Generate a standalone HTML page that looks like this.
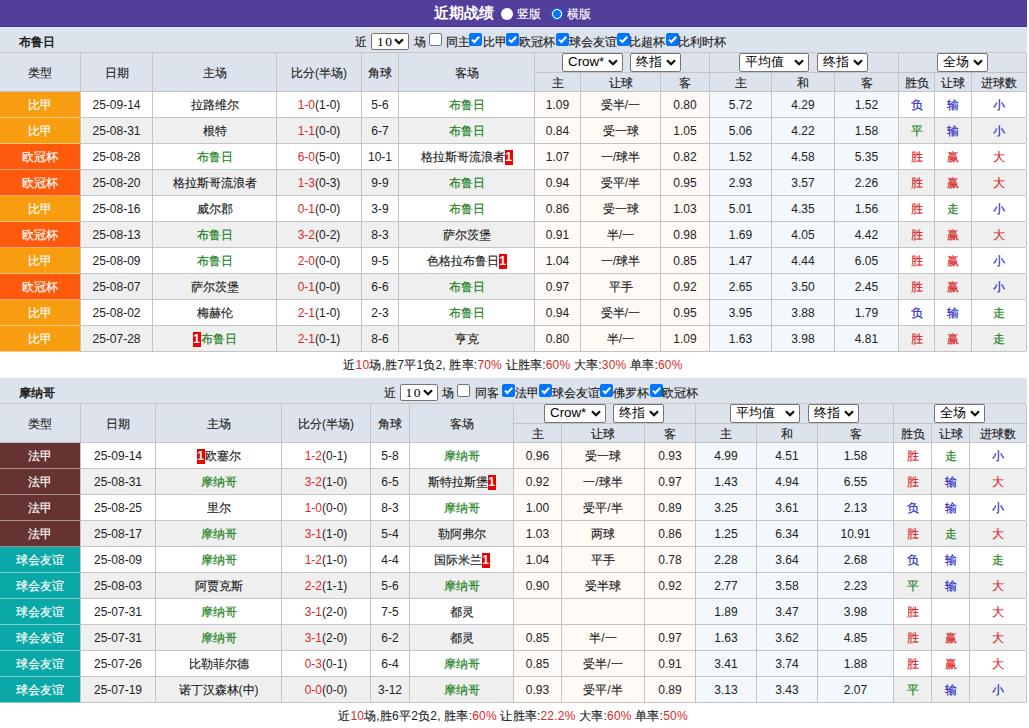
<!DOCTYPE html><html><head><meta charset="utf-8"><style>
html,body{margin:0;padding:0;background:#fff;}
body{width:1029px;height:728px;overflow:hidden;position:relative;font-family:"Liberation Sans",sans-serif;font-size:12px;color:#222;}
.b{position:absolute}
.t{position:absolute;text-align:center;white-space:nowrap;}
.c{-webkit-text-stroke:0.15px currentColor}
.bold .c{-webkit-text-stroke:0}
.bold{font-weight:bold;}
.hd{color:#222}
.ty{color:#fff}
.gr{color:#178017}
.rd{color:#d92a2a}
.rc{display:inline-block;background:#e00;color:#fff;font-weight:bold;width:8px;height:15px;line-height:15px;text-align:center;vertical-align:middle;font-size:12px}
.sum{text-align:center;letter-spacing:0.2px}
.sel{position:absolute;height:17px;border:1px solid #767676;border-radius:2px;background:#fff;font-size:13.33px;line-height:16px;color:#000}
.sel span{position:absolute;left:5px;top:0}
.chev{position:absolute;right:4px;top:5px}
.cb{position:absolute;width:11px;height:11px;border:1px solid #767676;border-radius:2px;background:#fff}
.cb.on{background:#0075ff;border-color:#0075ff}
.cb svg{position:absolute;left:-1px;top:-1px}
.radio{position:absolute;width:12px;height:12px;border-radius:50%;background:#fff}
.radio.on{background:radial-gradient(circle,#0075ff 0 3.6px,#fff 4px 4.7px,#0075ff 5.1px)}
</style></head><body>
<div class="b" style="left:0px;top:0px;width:1027px;height:27px;background:#523f9c"></div>
<div class="b" style="left:0px;top:26px;width:1027px;height:1px;background:#4a388e"></div>
<div class="t bold" style="left:434px;top:-1px;height:27px;line-height:27px;color:#fff;font-size:15px"><span class=c>近期战绩</span></div>
<div class="radio" style="left:500.5px;top:7.5px"></div>
<div class="t" style="left:517px;top:1px;height:27px;line-height:27px;color:#fff"><span class=c>竖版</span></div>
<div class="radio on" style="left:550.5px;top:7.5px"></div>
<div class="t" style="left:567px;top:1px;height:27px;line-height:27px;color:#fff"><span class=c>横版</span></div>
<div class="b" style="left:0px;top:27px;width:1027px;height:25px;background:#dce3ec"></div>
<div class="t bold" style="left:19px;top:30px;width:80px;height:25px;line-height:25px;text-align:left"><span class=c>布鲁日</span></div>
<div class="t tb" style="left:355px;top:29.5px;height:25px;line-height:25px"><span class=c>近</span></div><div class="sel" style="left:371px;top:33px;width:36px;height:15px;line-height:15px"><span style="left:5px;top:-0.5px;font-family:Liberation Serif;font-size:13.5px;letter-spacing:1.5px">10</span><svg class="chev" width="10" height="7" viewBox="0 0 10 7" style="right:4px;top:3.5px"><path d="M1 1.2 L5 5.2 L9 1.2" fill="none" stroke="#111" stroke-width="2.3"/></svg></div><div class="t tb" style="left:413.5px;top:29.5px;height:25px;line-height:25px"><span class=c>场</span></div><div class="cb" style="left:429px;top:33px"></div><div class="t tb" style="left:446px;top:29.5px;height:25px;line-height:25px"><span class=c>同主</span></div><div class="cb on" style="left:469px;top:33px"><svg width="13" height="13" viewBox="0 0 13 13"><path d="M3 6.6 L5.4 9 L10.2 3.8" fill="none" stroke="#fff" stroke-width="2"/></svg></div><div class="t tb" style="left:482.5px;top:29.5px;height:25px;line-height:25px"><span class=c>比甲</span></div><div class="cb on" style="left:506px;top:33px"><svg width="13" height="13" viewBox="0 0 13 13"><path d="M3 6.6 L5.4 9 L10.2 3.8" fill="none" stroke="#fff" stroke-width="2"/></svg></div><div class="t tb" style="left:519px;top:29.5px;height:25px;line-height:25px"><span class=c>欧冠杯</span></div><div class="cb on" style="left:556px;top:33px"><svg width="13" height="13" viewBox="0 0 13 13"><path d="M3 6.6 L5.4 9 L10.2 3.8" fill="none" stroke="#fff" stroke-width="2"/></svg></div><div class="t tb" style="left:568.5px;top:29.5px;height:25px;line-height:25px"><span class=c>球会友谊</span></div><div class="cb on" style="left:616.5px;top:33px"><svg width="13" height="13" viewBox="0 0 13 13"><path d="M3 6.6 L5.4 9 L10.2 3.8" fill="none" stroke="#fff" stroke-width="2"/></svg></div><div class="t tb" style="left:629px;top:29.5px;height:25px;line-height:25px"><span class=c>比超杯</span></div><div class="cb on" style="left:665.5px;top:33px"><svg width="13" height="13" viewBox="0 0 13 13"><path d="M3 6.6 L5.4 9 L10.2 3.8" fill="none" stroke="#fff" stroke-width="2"/></svg></div><div class="t tb" style="left:678px;top:29.5px;height:25px;line-height:25px"><span class=c>比利时杯</span></div>
<div class="b" style="left:0px;top:52px;width:1026px;height:1px;background:#c4c4c4"></div>
<div class="b" style="left:0px;top:53px;width:1026px;height:38px;background:#dce3ec"></div>
<div class="b" style="left:535px;top:72px;width:491px;height:1px;background:#c4c4c4"></div>
<div class="b" style="left:0px;top:91px;width:1026px;height:1px;background:#c4c4c4"></div>
<div class="b" style="left:80px;top:53px;width:1px;height:38px;background:#c4c4c4"></div>
<div class="b" style="left:152px;top:53px;width:1px;height:38px;background:#c4c4c4"></div>
<div class="b" style="left:276px;top:53px;width:1px;height:38px;background:#c4c4c4"></div>
<div class="b" style="left:361px;top:53px;width:1px;height:38px;background:#c4c4c4"></div>
<div class="b" style="left:398px;top:53px;width:1px;height:38px;background:#c4c4c4"></div>
<div class="b" style="left:534px;top:53px;width:1px;height:38px;background:#c4c4c4"></div>
<div class="b" style="left:709px;top:53px;width:1px;height:38px;background:#c4c4c4"></div>
<div class="b" style="left:898px;top:53px;width:1px;height:38px;background:#c4c4c4"></div>
<div class="b" style="left:1026px;top:53px;width:1px;height:38px;background:#c4c4c4"></div>
<div class="b" style="left:580px;top:73px;width:1px;height:18px;background:#c4c4c4"></div>
<div class="b" style="left:660px;top:73px;width:1px;height:18px;background:#c4c4c4"></div>
<div class="b" style="left:771px;top:73px;width:1px;height:18px;background:#c4c4c4"></div>
<div class="b" style="left:834px;top:73px;width:1px;height:18px;background:#c4c4c4"></div>
<div class="b" style="left:934px;top:73px;width:1px;height:18px;background:#c4c4c4"></div>
<div class="b" style="left:971px;top:73px;width:1px;height:18px;background:#c4c4c4"></div>
<div class="t hd" style="left:0px;top:54px;width:80px;height:38px;line-height:38px;"><span class=c>类型</span></div>
<div class="t hd" style="left:81px;top:54px;width:71px;height:38px;line-height:38px;"><span class=c>日期</span></div>
<div class="t hd" style="left:153px;top:54px;width:123px;height:38px;line-height:38px;"><span class=c>主场</span></div>
<div class="t hd" style="left:277px;top:54px;width:84px;height:38px;line-height:38px;"><span class=c>比分</span>(<span class=c>半场</span>)</div>
<div class="t hd" style="left:362px;top:54px;width:36px;height:38px;line-height:38px;"><span class=c>角球</span></div>
<div class="t hd" style="left:399px;top:54px;width:135px;height:38px;line-height:38px;"><span class=c>客场</span></div>
<div class="t hd" style="left:535px;top:74px;width:45px;height:18px;line-height:18px;"><span class=c>主</span></div>
<div class="t hd" style="left:581px;top:74px;width:79px;height:18px;line-height:18px;"><span class=c>让球</span></div>
<div class="t hd" style="left:661px;top:74px;width:48px;height:18px;line-height:18px;"><span class=c>客</span></div>
<div class="t hd" style="left:710px;top:74px;width:61px;height:18px;line-height:18px;"><span class=c>主</span></div>
<div class="t hd" style="left:772px;top:74px;width:62px;height:18px;line-height:18px;"><span class=c>和</span></div>
<div class="t hd" style="left:835px;top:74px;width:63px;height:18px;line-height:18px;"><span class=c>客</span></div>
<div class="t hd" style="left:899px;top:74px;width:35px;height:18px;line-height:18px;"><span class=c>胜负</span></div>
<div class="t hd" style="left:935px;top:74px;width:36px;height:18px;line-height:18px;"><span class=c>让球</span></div>
<div class="t hd" style="left:972px;top:74px;width:54px;height:18px;line-height:18px;"><span class=c>进球数</span></div>
<div class="sel" style="left:562px;top:53px;width:59px"><span>Crow*</span><svg class="chev" width="10" height="7" viewBox="0 0 10 7"><path d="M1 1.2 L5 5.2 L9 1.2" fill="none" stroke="#111" stroke-width="2.3"/></svg></div><div class="sel" style="left:630px;top:53px;width:49px"><span>终指</span><svg class="chev" width="10" height="7" viewBox="0 0 10 7"><path d="M1 1.2 L5 5.2 L9 1.2" fill="none" stroke="#111" stroke-width="2.3"/></svg></div><div class="sel" style="left:739px;top:53px;width:68px"><span>平均值</span><svg class="chev" width="10" height="7" viewBox="0 0 10 7"><path d="M1 1.2 L5 5.2 L9 1.2" fill="none" stroke="#111" stroke-width="2.3"/></svg></div><div class="sel" style="left:817px;top:53px;width:49px"><span>终指</span><svg class="chev" width="10" height="7" viewBox="0 0 10 7"><path d="M1 1.2 L5 5.2 L9 1.2" fill="none" stroke="#111" stroke-width="2.3"/></svg></div><div class="sel" style="left:937px;top:53px;width:49px"><span>全场</span><svg class="chev" width="10" height="7" viewBox="0 0 10 7"><path d="M1 1.2 L5 5.2 L9 1.2" fill="none" stroke="#111" stroke-width="2.3"/></svg></div>
<div class="b" style="left:0px;top:92px;width:1026px;height:25px;background:#fff"></div>
<div class="b" style="left:0px;top:92px;width:80px;height:25px;background:#f99d10"></div>
<div class="b" style="left:535px;top:92px;width:174px;height:25px;background:#fffaf6"></div>
<div class="b" style="left:710px;top:92px;width:188px;height:25px;background:#f2f8fc"></div>
<div class="b" style="left:80px;top:117px;width:946px;height:1px;background:#c4c4c4"></div>
<div class="b" style="left:0px;top:117px;width:80px;height:1px;background:#f99d10"></div>
<div class="b" style="left:0px;top:117px;width:80px;height:1px;background:rgba(255,255,255,0.45)"></div>
<div class="b" style="left:80px;top:92px;width:1px;height:25px;background:#c4c4c4"></div>
<div class="b" style="left:152px;top:92px;width:1px;height:25px;background:#c4c4c4"></div>
<div class="b" style="left:276px;top:92px;width:1px;height:25px;background:#c4c4c4"></div>
<div class="b" style="left:361px;top:92px;width:1px;height:25px;background:#c4c4c4"></div>
<div class="b" style="left:398px;top:92px;width:1px;height:25px;background:#c4c4c4"></div>
<div class="b" style="left:534px;top:92px;width:1px;height:25px;background:#c4c4c4"></div>
<div class="b" style="left:580px;top:92px;width:1px;height:25px;background:#c4c4c4"></div>
<div class="b" style="left:660px;top:92px;width:1px;height:25px;background:#c4c4c4"></div>
<div class="b" style="left:709px;top:92px;width:1px;height:25px;background:#c4c4c4"></div>
<div class="b" style="left:771px;top:92px;width:1px;height:25px;background:#c4c4c4"></div>
<div class="b" style="left:834px;top:92px;width:1px;height:25px;background:#c4c4c4"></div>
<div class="b" style="left:898px;top:92px;width:1px;height:25px;background:#c4c4c4"></div>
<div class="b" style="left:934px;top:92px;width:1px;height:25px;background:#c4c4c4"></div>
<div class="b" style="left:971px;top:92px;width:1px;height:25px;background:#c4c4c4"></div>
<div class="b" style="left:1026px;top:92px;width:1px;height:25px;background:#c4c4c4"></div>
<div class="t ty" style="left:0px;top:93px;width:80px;height:25px;line-height:25px;"><span class=c>比甲</span></div>
<div class="t " style="left:81px;top:93px;width:71px;height:25px;line-height:25px;">25-09-14</div>
<div class="t " style="left:153px;top:93px;width:123px;height:25px;line-height:25px;"><span class=c>拉路维尔</span></div>
<div class="t " style="left:277px;top:93px;width:84px;height:25px;line-height:25px;"><span class="rd">1-0</span>(1-0)</div>
<div class="t " style="left:362px;top:93px;width:36px;height:25px;line-height:25px;">5-6</div>
<div class="t " style="left:399px;top:93px;width:135px;height:25px;line-height:25px;"><span class="gr"><span class=c>布鲁日</span></span></div>
<div class="t " style="left:535px;top:93px;width:45px;height:25px;line-height:25px;">1.09</div>
<div class="t " style="left:581px;top:93px;width:79px;height:25px;line-height:25px;"><span class=c>受半</span>/<span class=c>一</span></div>
<div class="t " style="left:661px;top:93px;width:48px;height:25px;line-height:25px;">0.80</div>
<div class="t " style="left:710px;top:93px;width:61px;height:25px;line-height:25px;">5.72</div>
<div class="t " style="left:772px;top:93px;width:62px;height:25px;line-height:25px;">4.29</div>
<div class="t " style="left:835px;top:93px;width:63px;height:25px;line-height:25px;">1.52</div>
<div class="t " style="left:899px;top:93px;width:35px;height:25px;line-height:25px;color:#1c1cc0"><span class=c>负</span></div>
<div class="t " style="left:935px;top:93px;width:36px;height:25px;line-height:25px;color:#1c1cc0"><span class=c>输</span></div>
<div class="t " style="left:972px;top:93px;width:54px;height:25px;line-height:25px;color:#1c1cc0"><span class=c>小</span></div>
<div class="b" style="left:0px;top:118px;width:1026px;height:25px;background:#efefef"></div>
<div class="b" style="left:0px;top:118px;width:80px;height:25px;background:#f99d10"></div>
<div class="b" style="left:535px;top:118px;width:174px;height:25px;background:#fffaf6"></div>
<div class="b" style="left:710px;top:118px;width:188px;height:25px;background:#f2f8fc"></div>
<div class="b" style="left:80px;top:143px;width:946px;height:1px;background:#c4c4c4"></div>
<div class="b" style="left:0px;top:143px;width:80px;height:1px;background:#f99d10"></div>
<div class="b" style="left:0px;top:143px;width:80px;height:1px;background:rgba(255,255,255,0.45)"></div>
<div class="b" style="left:80px;top:118px;width:1px;height:25px;background:#c4c4c4"></div>
<div class="b" style="left:152px;top:118px;width:1px;height:25px;background:#c4c4c4"></div>
<div class="b" style="left:276px;top:118px;width:1px;height:25px;background:#c4c4c4"></div>
<div class="b" style="left:361px;top:118px;width:1px;height:25px;background:#c4c4c4"></div>
<div class="b" style="left:398px;top:118px;width:1px;height:25px;background:#c4c4c4"></div>
<div class="b" style="left:534px;top:118px;width:1px;height:25px;background:#c4c4c4"></div>
<div class="b" style="left:580px;top:118px;width:1px;height:25px;background:#c4c4c4"></div>
<div class="b" style="left:660px;top:118px;width:1px;height:25px;background:#c4c4c4"></div>
<div class="b" style="left:709px;top:118px;width:1px;height:25px;background:#c4c4c4"></div>
<div class="b" style="left:771px;top:118px;width:1px;height:25px;background:#c4c4c4"></div>
<div class="b" style="left:834px;top:118px;width:1px;height:25px;background:#c4c4c4"></div>
<div class="b" style="left:898px;top:118px;width:1px;height:25px;background:#c4c4c4"></div>
<div class="b" style="left:934px;top:118px;width:1px;height:25px;background:#c4c4c4"></div>
<div class="b" style="left:971px;top:118px;width:1px;height:25px;background:#c4c4c4"></div>
<div class="b" style="left:1026px;top:118px;width:1px;height:25px;background:#c4c4c4"></div>
<div class="t ty" style="left:0px;top:119px;width:80px;height:25px;line-height:25px;"><span class=c>比甲</span></div>
<div class="t " style="left:81px;top:119px;width:71px;height:25px;line-height:25px;">25-08-31</div>
<div class="t " style="left:153px;top:119px;width:123px;height:25px;line-height:25px;"><span class=c>根特</span></div>
<div class="t " style="left:277px;top:119px;width:84px;height:25px;line-height:25px;"><span class="rd">1-1</span>(0-0)</div>
<div class="t " style="left:362px;top:119px;width:36px;height:25px;line-height:25px;">6-7</div>
<div class="t " style="left:399px;top:119px;width:135px;height:25px;line-height:25px;"><span class="gr"><span class=c>布鲁日</span></span></div>
<div class="t " style="left:535px;top:119px;width:45px;height:25px;line-height:25px;">0.84</div>
<div class="t " style="left:581px;top:119px;width:79px;height:25px;line-height:25px;"><span class=c>受一球</span></div>
<div class="t " style="left:661px;top:119px;width:48px;height:25px;line-height:25px;">1.05</div>
<div class="t " style="left:710px;top:119px;width:61px;height:25px;line-height:25px;">5.06</div>
<div class="t " style="left:772px;top:119px;width:62px;height:25px;line-height:25px;">4.22</div>
<div class="t " style="left:835px;top:119px;width:63px;height:25px;line-height:25px;">1.58</div>
<div class="t " style="left:899px;top:119px;width:35px;height:25px;line-height:25px;color:#178017"><span class=c>平</span></div>
<div class="t " style="left:935px;top:119px;width:36px;height:25px;line-height:25px;color:#1c1cc0"><span class=c>输</span></div>
<div class="t " style="left:972px;top:119px;width:54px;height:25px;line-height:25px;color:#1c1cc0"><span class=c>小</span></div>
<div class="b" style="left:0px;top:144px;width:1026px;height:25px;background:#fff"></div>
<div class="b" style="left:0px;top:144px;width:80px;height:25px;background:#fd5a0d"></div>
<div class="b" style="left:535px;top:144px;width:174px;height:25px;background:#fffaf6"></div>
<div class="b" style="left:710px;top:144px;width:188px;height:25px;background:#f2f8fc"></div>
<div class="b" style="left:80px;top:169px;width:946px;height:1px;background:#c4c4c4"></div>
<div class="b" style="left:0px;top:169px;width:80px;height:1px;background:#fd5a0d"></div>
<div class="b" style="left:0px;top:169px;width:80px;height:1px;background:rgba(255,255,255,0.45)"></div>
<div class="b" style="left:80px;top:144px;width:1px;height:25px;background:#c4c4c4"></div>
<div class="b" style="left:152px;top:144px;width:1px;height:25px;background:#c4c4c4"></div>
<div class="b" style="left:276px;top:144px;width:1px;height:25px;background:#c4c4c4"></div>
<div class="b" style="left:361px;top:144px;width:1px;height:25px;background:#c4c4c4"></div>
<div class="b" style="left:398px;top:144px;width:1px;height:25px;background:#c4c4c4"></div>
<div class="b" style="left:534px;top:144px;width:1px;height:25px;background:#c4c4c4"></div>
<div class="b" style="left:580px;top:144px;width:1px;height:25px;background:#c4c4c4"></div>
<div class="b" style="left:660px;top:144px;width:1px;height:25px;background:#c4c4c4"></div>
<div class="b" style="left:709px;top:144px;width:1px;height:25px;background:#c4c4c4"></div>
<div class="b" style="left:771px;top:144px;width:1px;height:25px;background:#c4c4c4"></div>
<div class="b" style="left:834px;top:144px;width:1px;height:25px;background:#c4c4c4"></div>
<div class="b" style="left:898px;top:144px;width:1px;height:25px;background:#c4c4c4"></div>
<div class="b" style="left:934px;top:144px;width:1px;height:25px;background:#c4c4c4"></div>
<div class="b" style="left:971px;top:144px;width:1px;height:25px;background:#c4c4c4"></div>
<div class="b" style="left:1026px;top:144px;width:1px;height:25px;background:#c4c4c4"></div>
<div class="t ty" style="left:0px;top:145px;width:80px;height:25px;line-height:25px;"><span class=c>欧冠杯</span></div>
<div class="t " style="left:81px;top:145px;width:71px;height:25px;line-height:25px;">25-08-28</div>
<div class="t " style="left:153px;top:145px;width:123px;height:25px;line-height:25px;"><span class="gr"><span class=c>布鲁日</span></span></div>
<div class="t " style="left:277px;top:145px;width:84px;height:25px;line-height:25px;"><span class="rd">6-0</span>(5-0)</div>
<div class="t " style="left:362px;top:145px;width:36px;height:25px;line-height:25px;">10-1</div>
<div class="t " style="left:399px;top:145px;width:135px;height:25px;line-height:25px;"><span class=c>格拉斯哥流浪者</span><span class="rc">1</span></div>
<div class="t " style="left:535px;top:145px;width:45px;height:25px;line-height:25px;">1.07</div>
<div class="t " style="left:581px;top:145px;width:79px;height:25px;line-height:25px;"><span class=c>一</span>/<span class=c>球半</span></div>
<div class="t " style="left:661px;top:145px;width:48px;height:25px;line-height:25px;">0.82</div>
<div class="t " style="left:710px;top:145px;width:61px;height:25px;line-height:25px;">1.52</div>
<div class="t " style="left:772px;top:145px;width:62px;height:25px;line-height:25px;">4.58</div>
<div class="t " style="left:835px;top:145px;width:63px;height:25px;line-height:25px;">5.35</div>
<div class="t " style="left:899px;top:145px;width:35px;height:25px;line-height:25px;color:#d82222"><span class=c>胜</span></div>
<div class="t " style="left:935px;top:145px;width:36px;height:25px;line-height:25px;color:#d82222"><span class=c>赢</span></div>
<div class="t " style="left:972px;top:145px;width:54px;height:25px;line-height:25px;color:#d82222"><span class=c>大</span></div>
<div class="b" style="left:0px;top:170px;width:1026px;height:25px;background:#efefef"></div>
<div class="b" style="left:0px;top:170px;width:80px;height:25px;background:#fd5a0d"></div>
<div class="b" style="left:535px;top:170px;width:174px;height:25px;background:#fffaf6"></div>
<div class="b" style="left:710px;top:170px;width:188px;height:25px;background:#f2f8fc"></div>
<div class="b" style="left:80px;top:195px;width:946px;height:1px;background:#c4c4c4"></div>
<div class="b" style="left:0px;top:195px;width:80px;height:1px;background:#fd5a0d"></div>
<div class="b" style="left:0px;top:195px;width:80px;height:1px;background:rgba(255,255,255,0.45)"></div>
<div class="b" style="left:80px;top:170px;width:1px;height:25px;background:#c4c4c4"></div>
<div class="b" style="left:152px;top:170px;width:1px;height:25px;background:#c4c4c4"></div>
<div class="b" style="left:276px;top:170px;width:1px;height:25px;background:#c4c4c4"></div>
<div class="b" style="left:361px;top:170px;width:1px;height:25px;background:#c4c4c4"></div>
<div class="b" style="left:398px;top:170px;width:1px;height:25px;background:#c4c4c4"></div>
<div class="b" style="left:534px;top:170px;width:1px;height:25px;background:#c4c4c4"></div>
<div class="b" style="left:580px;top:170px;width:1px;height:25px;background:#c4c4c4"></div>
<div class="b" style="left:660px;top:170px;width:1px;height:25px;background:#c4c4c4"></div>
<div class="b" style="left:709px;top:170px;width:1px;height:25px;background:#c4c4c4"></div>
<div class="b" style="left:771px;top:170px;width:1px;height:25px;background:#c4c4c4"></div>
<div class="b" style="left:834px;top:170px;width:1px;height:25px;background:#c4c4c4"></div>
<div class="b" style="left:898px;top:170px;width:1px;height:25px;background:#c4c4c4"></div>
<div class="b" style="left:934px;top:170px;width:1px;height:25px;background:#c4c4c4"></div>
<div class="b" style="left:971px;top:170px;width:1px;height:25px;background:#c4c4c4"></div>
<div class="b" style="left:1026px;top:170px;width:1px;height:25px;background:#c4c4c4"></div>
<div class="t ty" style="left:0px;top:171px;width:80px;height:25px;line-height:25px;"><span class=c>欧冠杯</span></div>
<div class="t " style="left:81px;top:171px;width:71px;height:25px;line-height:25px;">25-08-20</div>
<div class="t " style="left:153px;top:171px;width:123px;height:25px;line-height:25px;"><span class=c>格拉斯哥流浪者</span></div>
<div class="t " style="left:277px;top:171px;width:84px;height:25px;line-height:25px;"><span class="rd">1-3</span>(0-3)</div>
<div class="t " style="left:362px;top:171px;width:36px;height:25px;line-height:25px;">9-9</div>
<div class="t " style="left:399px;top:171px;width:135px;height:25px;line-height:25px;"><span class="gr"><span class=c>布鲁日</span></span></div>
<div class="t " style="left:535px;top:171px;width:45px;height:25px;line-height:25px;">0.94</div>
<div class="t " style="left:581px;top:171px;width:79px;height:25px;line-height:25px;"><span class=c>受平</span>/<span class=c>半</span></div>
<div class="t " style="left:661px;top:171px;width:48px;height:25px;line-height:25px;">0.95</div>
<div class="t " style="left:710px;top:171px;width:61px;height:25px;line-height:25px;">2.93</div>
<div class="t " style="left:772px;top:171px;width:62px;height:25px;line-height:25px;">3.57</div>
<div class="t " style="left:835px;top:171px;width:63px;height:25px;line-height:25px;">2.26</div>
<div class="t " style="left:899px;top:171px;width:35px;height:25px;line-height:25px;color:#d82222"><span class=c>胜</span></div>
<div class="t " style="left:935px;top:171px;width:36px;height:25px;line-height:25px;color:#d82222"><span class=c>赢</span></div>
<div class="t " style="left:972px;top:171px;width:54px;height:25px;line-height:25px;color:#d82222"><span class=c>大</span></div>
<div class="b" style="left:0px;top:196px;width:1026px;height:25px;background:#fff"></div>
<div class="b" style="left:0px;top:196px;width:80px;height:25px;background:#f99d10"></div>
<div class="b" style="left:535px;top:196px;width:174px;height:25px;background:#fffaf6"></div>
<div class="b" style="left:710px;top:196px;width:188px;height:25px;background:#f2f8fc"></div>
<div class="b" style="left:80px;top:221px;width:946px;height:1px;background:#c4c4c4"></div>
<div class="b" style="left:0px;top:221px;width:80px;height:1px;background:#f99d10"></div>
<div class="b" style="left:0px;top:221px;width:80px;height:1px;background:rgba(255,255,255,0.45)"></div>
<div class="b" style="left:80px;top:196px;width:1px;height:25px;background:#c4c4c4"></div>
<div class="b" style="left:152px;top:196px;width:1px;height:25px;background:#c4c4c4"></div>
<div class="b" style="left:276px;top:196px;width:1px;height:25px;background:#c4c4c4"></div>
<div class="b" style="left:361px;top:196px;width:1px;height:25px;background:#c4c4c4"></div>
<div class="b" style="left:398px;top:196px;width:1px;height:25px;background:#c4c4c4"></div>
<div class="b" style="left:534px;top:196px;width:1px;height:25px;background:#c4c4c4"></div>
<div class="b" style="left:580px;top:196px;width:1px;height:25px;background:#c4c4c4"></div>
<div class="b" style="left:660px;top:196px;width:1px;height:25px;background:#c4c4c4"></div>
<div class="b" style="left:709px;top:196px;width:1px;height:25px;background:#c4c4c4"></div>
<div class="b" style="left:771px;top:196px;width:1px;height:25px;background:#c4c4c4"></div>
<div class="b" style="left:834px;top:196px;width:1px;height:25px;background:#c4c4c4"></div>
<div class="b" style="left:898px;top:196px;width:1px;height:25px;background:#c4c4c4"></div>
<div class="b" style="left:934px;top:196px;width:1px;height:25px;background:#c4c4c4"></div>
<div class="b" style="left:971px;top:196px;width:1px;height:25px;background:#c4c4c4"></div>
<div class="b" style="left:1026px;top:196px;width:1px;height:25px;background:#c4c4c4"></div>
<div class="t ty" style="left:0px;top:197px;width:80px;height:25px;line-height:25px;"><span class=c>比甲</span></div>
<div class="t " style="left:81px;top:197px;width:71px;height:25px;line-height:25px;">25-08-16</div>
<div class="t " style="left:153px;top:197px;width:123px;height:25px;line-height:25px;"><span class=c>威尔郡</span></div>
<div class="t " style="left:277px;top:197px;width:84px;height:25px;line-height:25px;"><span class="rd">0-1</span>(0-0)</div>
<div class="t " style="left:362px;top:197px;width:36px;height:25px;line-height:25px;">3-9</div>
<div class="t " style="left:399px;top:197px;width:135px;height:25px;line-height:25px;"><span class="gr"><span class=c>布鲁日</span></span></div>
<div class="t " style="left:535px;top:197px;width:45px;height:25px;line-height:25px;">0.86</div>
<div class="t " style="left:581px;top:197px;width:79px;height:25px;line-height:25px;"><span class=c>受一球</span></div>
<div class="t " style="left:661px;top:197px;width:48px;height:25px;line-height:25px;">1.03</div>
<div class="t " style="left:710px;top:197px;width:61px;height:25px;line-height:25px;">5.01</div>
<div class="t " style="left:772px;top:197px;width:62px;height:25px;line-height:25px;">4.35</div>
<div class="t " style="left:835px;top:197px;width:63px;height:25px;line-height:25px;">1.56</div>
<div class="t " style="left:899px;top:197px;width:35px;height:25px;line-height:25px;color:#d82222"><span class=c>胜</span></div>
<div class="t " style="left:935px;top:197px;width:36px;height:25px;line-height:25px;color:#178017"><span class=c>走</span></div>
<div class="t " style="left:972px;top:197px;width:54px;height:25px;line-height:25px;color:#1c1cc0"><span class=c>小</span></div>
<div class="b" style="left:0px;top:222px;width:1026px;height:25px;background:#efefef"></div>
<div class="b" style="left:0px;top:222px;width:80px;height:25px;background:#fd5a0d"></div>
<div class="b" style="left:535px;top:222px;width:174px;height:25px;background:#fffaf6"></div>
<div class="b" style="left:710px;top:222px;width:188px;height:25px;background:#f2f8fc"></div>
<div class="b" style="left:80px;top:247px;width:946px;height:1px;background:#c4c4c4"></div>
<div class="b" style="left:0px;top:247px;width:80px;height:1px;background:#fd5a0d"></div>
<div class="b" style="left:0px;top:247px;width:80px;height:1px;background:rgba(255,255,255,0.45)"></div>
<div class="b" style="left:80px;top:222px;width:1px;height:25px;background:#c4c4c4"></div>
<div class="b" style="left:152px;top:222px;width:1px;height:25px;background:#c4c4c4"></div>
<div class="b" style="left:276px;top:222px;width:1px;height:25px;background:#c4c4c4"></div>
<div class="b" style="left:361px;top:222px;width:1px;height:25px;background:#c4c4c4"></div>
<div class="b" style="left:398px;top:222px;width:1px;height:25px;background:#c4c4c4"></div>
<div class="b" style="left:534px;top:222px;width:1px;height:25px;background:#c4c4c4"></div>
<div class="b" style="left:580px;top:222px;width:1px;height:25px;background:#c4c4c4"></div>
<div class="b" style="left:660px;top:222px;width:1px;height:25px;background:#c4c4c4"></div>
<div class="b" style="left:709px;top:222px;width:1px;height:25px;background:#c4c4c4"></div>
<div class="b" style="left:771px;top:222px;width:1px;height:25px;background:#c4c4c4"></div>
<div class="b" style="left:834px;top:222px;width:1px;height:25px;background:#c4c4c4"></div>
<div class="b" style="left:898px;top:222px;width:1px;height:25px;background:#c4c4c4"></div>
<div class="b" style="left:934px;top:222px;width:1px;height:25px;background:#c4c4c4"></div>
<div class="b" style="left:971px;top:222px;width:1px;height:25px;background:#c4c4c4"></div>
<div class="b" style="left:1026px;top:222px;width:1px;height:25px;background:#c4c4c4"></div>
<div class="t ty" style="left:0px;top:223px;width:80px;height:25px;line-height:25px;"><span class=c>欧冠杯</span></div>
<div class="t " style="left:81px;top:223px;width:71px;height:25px;line-height:25px;">25-08-13</div>
<div class="t " style="left:153px;top:223px;width:123px;height:25px;line-height:25px;"><span class="gr"><span class=c>布鲁日</span></span></div>
<div class="t " style="left:277px;top:223px;width:84px;height:25px;line-height:25px;"><span class="rd">3-2</span>(0-2)</div>
<div class="t " style="left:362px;top:223px;width:36px;height:25px;line-height:25px;">8-3</div>
<div class="t " style="left:399px;top:223px;width:135px;height:25px;line-height:25px;"><span class=c>萨尔茨堡</span></div>
<div class="t " style="left:535px;top:223px;width:45px;height:25px;line-height:25px;">0.91</div>
<div class="t " style="left:581px;top:223px;width:79px;height:25px;line-height:25px;"><span class=c>半</span>/<span class=c>一</span></div>
<div class="t " style="left:661px;top:223px;width:48px;height:25px;line-height:25px;">0.98</div>
<div class="t " style="left:710px;top:223px;width:61px;height:25px;line-height:25px;">1.69</div>
<div class="t " style="left:772px;top:223px;width:62px;height:25px;line-height:25px;">4.05</div>
<div class="t " style="left:835px;top:223px;width:63px;height:25px;line-height:25px;">4.42</div>
<div class="t " style="left:899px;top:223px;width:35px;height:25px;line-height:25px;color:#d82222"><span class=c>胜</span></div>
<div class="t " style="left:935px;top:223px;width:36px;height:25px;line-height:25px;color:#d82222"><span class=c>赢</span></div>
<div class="t " style="left:972px;top:223px;width:54px;height:25px;line-height:25px;color:#d82222"><span class=c>大</span></div>
<div class="b" style="left:0px;top:248px;width:1026px;height:25px;background:#fff"></div>
<div class="b" style="left:0px;top:248px;width:80px;height:25px;background:#f99d10"></div>
<div class="b" style="left:535px;top:248px;width:174px;height:25px;background:#fffaf6"></div>
<div class="b" style="left:710px;top:248px;width:188px;height:25px;background:#f2f8fc"></div>
<div class="b" style="left:80px;top:273px;width:946px;height:1px;background:#c4c4c4"></div>
<div class="b" style="left:0px;top:273px;width:80px;height:1px;background:#f99d10"></div>
<div class="b" style="left:0px;top:273px;width:80px;height:1px;background:rgba(255,255,255,0.45)"></div>
<div class="b" style="left:80px;top:248px;width:1px;height:25px;background:#c4c4c4"></div>
<div class="b" style="left:152px;top:248px;width:1px;height:25px;background:#c4c4c4"></div>
<div class="b" style="left:276px;top:248px;width:1px;height:25px;background:#c4c4c4"></div>
<div class="b" style="left:361px;top:248px;width:1px;height:25px;background:#c4c4c4"></div>
<div class="b" style="left:398px;top:248px;width:1px;height:25px;background:#c4c4c4"></div>
<div class="b" style="left:534px;top:248px;width:1px;height:25px;background:#c4c4c4"></div>
<div class="b" style="left:580px;top:248px;width:1px;height:25px;background:#c4c4c4"></div>
<div class="b" style="left:660px;top:248px;width:1px;height:25px;background:#c4c4c4"></div>
<div class="b" style="left:709px;top:248px;width:1px;height:25px;background:#c4c4c4"></div>
<div class="b" style="left:771px;top:248px;width:1px;height:25px;background:#c4c4c4"></div>
<div class="b" style="left:834px;top:248px;width:1px;height:25px;background:#c4c4c4"></div>
<div class="b" style="left:898px;top:248px;width:1px;height:25px;background:#c4c4c4"></div>
<div class="b" style="left:934px;top:248px;width:1px;height:25px;background:#c4c4c4"></div>
<div class="b" style="left:971px;top:248px;width:1px;height:25px;background:#c4c4c4"></div>
<div class="b" style="left:1026px;top:248px;width:1px;height:25px;background:#c4c4c4"></div>
<div class="t ty" style="left:0px;top:249px;width:80px;height:25px;line-height:25px;"><span class=c>比甲</span></div>
<div class="t " style="left:81px;top:249px;width:71px;height:25px;line-height:25px;">25-08-09</div>
<div class="t " style="left:153px;top:249px;width:123px;height:25px;line-height:25px;"><span class="gr"><span class=c>布鲁日</span></span></div>
<div class="t " style="left:277px;top:249px;width:84px;height:25px;line-height:25px;"><span class="rd">2-0</span>(0-0)</div>
<div class="t " style="left:362px;top:249px;width:36px;height:25px;line-height:25px;">9-5</div>
<div class="t " style="left:399px;top:249px;width:135px;height:25px;line-height:25px;"><span class=c>色格拉布鲁日</span><span class="rc">1</span></div>
<div class="t " style="left:535px;top:249px;width:45px;height:25px;line-height:25px;">1.04</div>
<div class="t " style="left:581px;top:249px;width:79px;height:25px;line-height:25px;"><span class=c>一</span>/<span class=c>球半</span></div>
<div class="t " style="left:661px;top:249px;width:48px;height:25px;line-height:25px;">0.85</div>
<div class="t " style="left:710px;top:249px;width:61px;height:25px;line-height:25px;">1.47</div>
<div class="t " style="left:772px;top:249px;width:62px;height:25px;line-height:25px;">4.44</div>
<div class="t " style="left:835px;top:249px;width:63px;height:25px;line-height:25px;">6.05</div>
<div class="t " style="left:899px;top:249px;width:35px;height:25px;line-height:25px;color:#d82222"><span class=c>胜</span></div>
<div class="t " style="left:935px;top:249px;width:36px;height:25px;line-height:25px;color:#d82222"><span class=c>赢</span></div>
<div class="t " style="left:972px;top:249px;width:54px;height:25px;line-height:25px;color:#1c1cc0"><span class=c>小</span></div>
<div class="b" style="left:0px;top:274px;width:1026px;height:25px;background:#efefef"></div>
<div class="b" style="left:0px;top:274px;width:80px;height:25px;background:#fd5a0d"></div>
<div class="b" style="left:535px;top:274px;width:174px;height:25px;background:#fffaf6"></div>
<div class="b" style="left:710px;top:274px;width:188px;height:25px;background:#f2f8fc"></div>
<div class="b" style="left:80px;top:299px;width:946px;height:1px;background:#c4c4c4"></div>
<div class="b" style="left:0px;top:299px;width:80px;height:1px;background:#fd5a0d"></div>
<div class="b" style="left:0px;top:299px;width:80px;height:1px;background:rgba(255,255,255,0.45)"></div>
<div class="b" style="left:80px;top:274px;width:1px;height:25px;background:#c4c4c4"></div>
<div class="b" style="left:152px;top:274px;width:1px;height:25px;background:#c4c4c4"></div>
<div class="b" style="left:276px;top:274px;width:1px;height:25px;background:#c4c4c4"></div>
<div class="b" style="left:361px;top:274px;width:1px;height:25px;background:#c4c4c4"></div>
<div class="b" style="left:398px;top:274px;width:1px;height:25px;background:#c4c4c4"></div>
<div class="b" style="left:534px;top:274px;width:1px;height:25px;background:#c4c4c4"></div>
<div class="b" style="left:580px;top:274px;width:1px;height:25px;background:#c4c4c4"></div>
<div class="b" style="left:660px;top:274px;width:1px;height:25px;background:#c4c4c4"></div>
<div class="b" style="left:709px;top:274px;width:1px;height:25px;background:#c4c4c4"></div>
<div class="b" style="left:771px;top:274px;width:1px;height:25px;background:#c4c4c4"></div>
<div class="b" style="left:834px;top:274px;width:1px;height:25px;background:#c4c4c4"></div>
<div class="b" style="left:898px;top:274px;width:1px;height:25px;background:#c4c4c4"></div>
<div class="b" style="left:934px;top:274px;width:1px;height:25px;background:#c4c4c4"></div>
<div class="b" style="left:971px;top:274px;width:1px;height:25px;background:#c4c4c4"></div>
<div class="b" style="left:1026px;top:274px;width:1px;height:25px;background:#c4c4c4"></div>
<div class="t ty" style="left:0px;top:275px;width:80px;height:25px;line-height:25px;"><span class=c>欧冠杯</span></div>
<div class="t " style="left:81px;top:275px;width:71px;height:25px;line-height:25px;">25-08-07</div>
<div class="t " style="left:153px;top:275px;width:123px;height:25px;line-height:25px;"><span class=c>萨尔茨堡</span></div>
<div class="t " style="left:277px;top:275px;width:84px;height:25px;line-height:25px;"><span class="rd">0-1</span>(0-0)</div>
<div class="t " style="left:362px;top:275px;width:36px;height:25px;line-height:25px;">6-6</div>
<div class="t " style="left:399px;top:275px;width:135px;height:25px;line-height:25px;"><span class="gr"><span class=c>布鲁日</span></span></div>
<div class="t " style="left:535px;top:275px;width:45px;height:25px;line-height:25px;">0.97</div>
<div class="t " style="left:581px;top:275px;width:79px;height:25px;line-height:25px;"><span class=c>平手</span></div>
<div class="t " style="left:661px;top:275px;width:48px;height:25px;line-height:25px;">0.92</div>
<div class="t " style="left:710px;top:275px;width:61px;height:25px;line-height:25px;">2.65</div>
<div class="t " style="left:772px;top:275px;width:62px;height:25px;line-height:25px;">3.50</div>
<div class="t " style="left:835px;top:275px;width:63px;height:25px;line-height:25px;">2.45</div>
<div class="t " style="left:899px;top:275px;width:35px;height:25px;line-height:25px;color:#d82222"><span class=c>胜</span></div>
<div class="t " style="left:935px;top:275px;width:36px;height:25px;line-height:25px;color:#d82222"><span class=c>赢</span></div>
<div class="t " style="left:972px;top:275px;width:54px;height:25px;line-height:25px;color:#1c1cc0"><span class=c>小</span></div>
<div class="b" style="left:0px;top:300px;width:1026px;height:25px;background:#fff"></div>
<div class="b" style="left:0px;top:300px;width:80px;height:25px;background:#f99d10"></div>
<div class="b" style="left:535px;top:300px;width:174px;height:25px;background:#fffaf6"></div>
<div class="b" style="left:710px;top:300px;width:188px;height:25px;background:#f2f8fc"></div>
<div class="b" style="left:80px;top:325px;width:946px;height:1px;background:#c4c4c4"></div>
<div class="b" style="left:0px;top:325px;width:80px;height:1px;background:#f99d10"></div>
<div class="b" style="left:0px;top:325px;width:80px;height:1px;background:rgba(255,255,255,0.45)"></div>
<div class="b" style="left:80px;top:300px;width:1px;height:25px;background:#c4c4c4"></div>
<div class="b" style="left:152px;top:300px;width:1px;height:25px;background:#c4c4c4"></div>
<div class="b" style="left:276px;top:300px;width:1px;height:25px;background:#c4c4c4"></div>
<div class="b" style="left:361px;top:300px;width:1px;height:25px;background:#c4c4c4"></div>
<div class="b" style="left:398px;top:300px;width:1px;height:25px;background:#c4c4c4"></div>
<div class="b" style="left:534px;top:300px;width:1px;height:25px;background:#c4c4c4"></div>
<div class="b" style="left:580px;top:300px;width:1px;height:25px;background:#c4c4c4"></div>
<div class="b" style="left:660px;top:300px;width:1px;height:25px;background:#c4c4c4"></div>
<div class="b" style="left:709px;top:300px;width:1px;height:25px;background:#c4c4c4"></div>
<div class="b" style="left:771px;top:300px;width:1px;height:25px;background:#c4c4c4"></div>
<div class="b" style="left:834px;top:300px;width:1px;height:25px;background:#c4c4c4"></div>
<div class="b" style="left:898px;top:300px;width:1px;height:25px;background:#c4c4c4"></div>
<div class="b" style="left:934px;top:300px;width:1px;height:25px;background:#c4c4c4"></div>
<div class="b" style="left:971px;top:300px;width:1px;height:25px;background:#c4c4c4"></div>
<div class="b" style="left:1026px;top:300px;width:1px;height:25px;background:#c4c4c4"></div>
<div class="t ty" style="left:0px;top:301px;width:80px;height:25px;line-height:25px;"><span class=c>比甲</span></div>
<div class="t " style="left:81px;top:301px;width:71px;height:25px;line-height:25px;">25-08-02</div>
<div class="t " style="left:153px;top:301px;width:123px;height:25px;line-height:25px;"><span class=c>梅赫伦</span></div>
<div class="t " style="left:277px;top:301px;width:84px;height:25px;line-height:25px;"><span class="rd">2-1</span>(1-0)</div>
<div class="t " style="left:362px;top:301px;width:36px;height:25px;line-height:25px;">2-3</div>
<div class="t " style="left:399px;top:301px;width:135px;height:25px;line-height:25px;"><span class="gr"><span class=c>布鲁日</span></span></div>
<div class="t " style="left:535px;top:301px;width:45px;height:25px;line-height:25px;">0.94</div>
<div class="t " style="left:581px;top:301px;width:79px;height:25px;line-height:25px;"><span class=c>受半</span>/<span class=c>一</span></div>
<div class="t " style="left:661px;top:301px;width:48px;height:25px;line-height:25px;">0.95</div>
<div class="t " style="left:710px;top:301px;width:61px;height:25px;line-height:25px;">3.95</div>
<div class="t " style="left:772px;top:301px;width:62px;height:25px;line-height:25px;">3.88</div>
<div class="t " style="left:835px;top:301px;width:63px;height:25px;line-height:25px;">1.79</div>
<div class="t " style="left:899px;top:301px;width:35px;height:25px;line-height:25px;color:#1c1cc0"><span class=c>负</span></div>
<div class="t " style="left:935px;top:301px;width:36px;height:25px;line-height:25px;color:#1c1cc0"><span class=c>输</span></div>
<div class="t " style="left:972px;top:301px;width:54px;height:25px;line-height:25px;color:#178017"><span class=c>走</span></div>
<div class="b" style="left:0px;top:326px;width:1026px;height:25px;background:#efefef"></div>
<div class="b" style="left:0px;top:326px;width:80px;height:25px;background:#f99d10"></div>
<div class="b" style="left:535px;top:326px;width:174px;height:25px;background:#fffaf6"></div>
<div class="b" style="left:710px;top:326px;width:188px;height:25px;background:#f2f8fc"></div>
<div class="b" style="left:80px;top:351px;width:946px;height:1px;background:#c4c4c4"></div>
<div class="b" style="left:0px;top:351px;width:80px;height:1px;background:#f99d10"></div>
<div class="b" style="left:0px;top:351px;width:80px;height:1px;background:rgba(255,255,255,0.45)"></div>
<div class="b" style="left:80px;top:326px;width:1px;height:25px;background:#c4c4c4"></div>
<div class="b" style="left:152px;top:326px;width:1px;height:25px;background:#c4c4c4"></div>
<div class="b" style="left:276px;top:326px;width:1px;height:25px;background:#c4c4c4"></div>
<div class="b" style="left:361px;top:326px;width:1px;height:25px;background:#c4c4c4"></div>
<div class="b" style="left:398px;top:326px;width:1px;height:25px;background:#c4c4c4"></div>
<div class="b" style="left:534px;top:326px;width:1px;height:25px;background:#c4c4c4"></div>
<div class="b" style="left:580px;top:326px;width:1px;height:25px;background:#c4c4c4"></div>
<div class="b" style="left:660px;top:326px;width:1px;height:25px;background:#c4c4c4"></div>
<div class="b" style="left:709px;top:326px;width:1px;height:25px;background:#c4c4c4"></div>
<div class="b" style="left:771px;top:326px;width:1px;height:25px;background:#c4c4c4"></div>
<div class="b" style="left:834px;top:326px;width:1px;height:25px;background:#c4c4c4"></div>
<div class="b" style="left:898px;top:326px;width:1px;height:25px;background:#c4c4c4"></div>
<div class="b" style="left:934px;top:326px;width:1px;height:25px;background:#c4c4c4"></div>
<div class="b" style="left:971px;top:326px;width:1px;height:25px;background:#c4c4c4"></div>
<div class="b" style="left:1026px;top:326px;width:1px;height:25px;background:#c4c4c4"></div>
<div class="t ty" style="left:0px;top:327px;width:80px;height:25px;line-height:25px;"><span class=c>比甲</span></div>
<div class="t " style="left:81px;top:327px;width:71px;height:25px;line-height:25px;">25-07-28</div>
<div class="t " style="left:153px;top:327px;width:123px;height:25px;line-height:25px;"><span class="rc">1</span><span class="gr"><span class=c>布鲁日</span></span></div>
<div class="t " style="left:277px;top:327px;width:84px;height:25px;line-height:25px;"><span class="rd">2-1</span>(0-1)</div>
<div class="t " style="left:362px;top:327px;width:36px;height:25px;line-height:25px;">8-6</div>
<div class="t " style="left:399px;top:327px;width:135px;height:25px;line-height:25px;"><span class=c>亨克</span></div>
<div class="t " style="left:535px;top:327px;width:45px;height:25px;line-height:25px;">0.80</div>
<div class="t " style="left:581px;top:327px;width:79px;height:25px;line-height:25px;"><span class=c>半</span>/<span class=c>一</span></div>
<div class="t " style="left:661px;top:327px;width:48px;height:25px;line-height:25px;">1.09</div>
<div class="t " style="left:710px;top:327px;width:61px;height:25px;line-height:25px;">1.63</div>
<div class="t " style="left:772px;top:327px;width:62px;height:25px;line-height:25px;">3.98</div>
<div class="t " style="left:835px;top:327px;width:63px;height:25px;line-height:25px;">4.81</div>
<div class="t " style="left:899px;top:327px;width:35px;height:25px;line-height:25px;color:#d82222"><span class=c>胜</span></div>
<div class="t " style="left:935px;top:327px;width:36px;height:25px;line-height:25px;color:#d82222"><span class=c>赢</span></div>
<div class="t " style="left:972px;top:327px;width:54px;height:25px;line-height:25px;color:#178017"><span class=c>走</span></div>
<div class="t sum" style="left:0px;top:353px;width:1026px;height:25px;line-height:25px;"><span class=c>近</span><span class="rd">10</span><span class=c>场</span>,<span class=c>胜</span>7<span class=c>平</span>1<span class=c>负</span>2, <span class=c>胜率</span>:<span class="rd">70%</span> <span class=c>让胜率</span>:<span class="rd">60%</span> <span class=c>大率</span>:<span class="rd">30%</span> <span class=c>单率</span>:<span class="rd">60%</span></div>
<div class="b" style="left:0px;top:27px;width:1027px;height:1px;background:#e6e4f7"></div>
<div class="b" style="left:0px;top:378px;width:1027px;height:25px;background:#dce3ec"></div>
<div class="t bold" style="left:19px;top:381px;width:80px;height:25px;line-height:25px;text-align:left"><span class=c>摩纳哥</span></div>
<div class="t tb" style="left:383.5px;top:380.5px;height:25px;line-height:25px"><span class=c>近</span></div><div class="sel" style="left:399.5px;top:384px;width:36px;height:15px;line-height:15px"><span style="left:5px;top:-0.5px;font-family:Liberation Serif;font-size:13.5px;letter-spacing:1.5px">10</span><svg class="chev" width="10" height="7" viewBox="0 0 10 7" style="right:4px;top:3.5px"><path d="M1 1.2 L5 5.2 L9 1.2" fill="none" stroke="#111" stroke-width="2.3"/></svg></div><div class="t tb" style="left:442px;top:380.5px;height:25px;line-height:25px"><span class=c>场</span></div><div class="cb" style="left:457px;top:384px"></div><div class="t tb" style="left:474.5px;top:380.5px;height:25px;line-height:25px"><span class=c>同客</span></div><div class="cb on" style="left:502px;top:384px"><svg width="13" height="13" viewBox="0 0 13 13"><path d="M3 6.6 L5.4 9 L10.2 3.8" fill="none" stroke="#fff" stroke-width="2"/></svg></div><div class="t tb" style="left:515px;top:380.5px;height:25px;line-height:25px"><span class=c>法甲</span></div><div class="cb on" style="left:539px;top:384px"><svg width="13" height="13" viewBox="0 0 13 13"><path d="M3 6.6 L5.4 9 L10.2 3.8" fill="none" stroke="#fff" stroke-width="2"/></svg></div><div class="t tb" style="left:552px;top:380.5px;height:25px;line-height:25px"><span class=c>球会友谊</span></div><div class="cb on" style="left:600px;top:384px"><svg width="13" height="13" viewBox="0 0 13 13"><path d="M3 6.6 L5.4 9 L10.2 3.8" fill="none" stroke="#fff" stroke-width="2"/></svg></div><div class="t tb" style="left:613px;top:380.5px;height:25px;line-height:25px"><span class=c>佛罗杯</span></div><div class="cb on" style="left:649.5px;top:384px"><svg width="13" height="13" viewBox="0 0 13 13"><path d="M3 6.6 L5.4 9 L10.2 3.8" fill="none" stroke="#fff" stroke-width="2"/></svg></div><div class="t tb" style="left:662px;top:380.5px;height:25px;line-height:25px"><span class=c>欧冠杯</span></div>
<div class="b" style="left:0px;top:403px;width:1026px;height:1px;background:#c4c4c4"></div>
<div class="b" style="left:0px;top:404px;width:1026px;height:38px;background:#dce3ec"></div>
<div class="b" style="left:514px;top:423px;width:512px;height:1px;background:#c4c4c4"></div>
<div class="b" style="left:0px;top:442px;width:1026px;height:1px;background:#c4c4c4"></div>
<div class="b" style="left:80px;top:404px;width:1px;height:38px;background:#c4c4c4"></div>
<div class="b" style="left:155px;top:404px;width:1px;height:38px;background:#c4c4c4"></div>
<div class="b" style="left:281px;top:404px;width:1px;height:38px;background:#c4c4c4"></div>
<div class="b" style="left:370px;top:404px;width:1px;height:38px;background:#c4c4c4"></div>
<div class="b" style="left:409px;top:404px;width:1px;height:38px;background:#c4c4c4"></div>
<div class="b" style="left:513px;top:404px;width:1px;height:38px;background:#c4c4c4"></div>
<div class="b" style="left:695px;top:404px;width:1px;height:38px;background:#c4c4c4"></div>
<div class="b" style="left:893px;top:404px;width:1px;height:38px;background:#c4c4c4"></div>
<div class="b" style="left:1026px;top:404px;width:1px;height:38px;background:#c4c4c4"></div>
<div class="b" style="left:561px;top:424px;width:1px;height:18px;background:#c4c4c4"></div>
<div class="b" style="left:644px;top:424px;width:1px;height:18px;background:#c4c4c4"></div>
<div class="b" style="left:756px;top:424px;width:1px;height:18px;background:#c4c4c4"></div>
<div class="b" style="left:817px;top:424px;width:1px;height:18px;background:#c4c4c4"></div>
<div class="b" style="left:931px;top:424px;width:1px;height:18px;background:#c4c4c4"></div>
<div class="b" style="left:969px;top:424px;width:1px;height:18px;background:#c4c4c4"></div>
<div class="t hd" style="left:0px;top:405px;width:80px;height:38px;line-height:38px;"><span class=c>类型</span></div>
<div class="t hd" style="left:81px;top:405px;width:74px;height:38px;line-height:38px;"><span class=c>日期</span></div>
<div class="t hd" style="left:156px;top:405px;width:125px;height:38px;line-height:38px;"><span class=c>主场</span></div>
<div class="t hd" style="left:282px;top:405px;width:88px;height:38px;line-height:38px;"><span class=c>比分</span>(<span class=c>半场</span>)</div>
<div class="t hd" style="left:371px;top:405px;width:38px;height:38px;line-height:38px;"><span class=c>角球</span></div>
<div class="t hd" style="left:410px;top:405px;width:103px;height:38px;line-height:38px;"><span class=c>客场</span></div>
<div class="t hd" style="left:514px;top:425px;width:47px;height:18px;line-height:18px;"><span class=c>主</span></div>
<div class="t hd" style="left:562px;top:425px;width:82px;height:18px;line-height:18px;"><span class=c>让球</span></div>
<div class="t hd" style="left:645px;top:425px;width:50px;height:18px;line-height:18px;"><span class=c>客</span></div>
<div class="t hd" style="left:696px;top:425px;width:60px;height:18px;line-height:18px;"><span class=c>主</span></div>
<div class="t hd" style="left:757px;top:425px;width:60px;height:18px;line-height:18px;"><span class=c>和</span></div>
<div class="t hd" style="left:818px;top:425px;width:75px;height:18px;line-height:18px;"><span class=c>客</span></div>
<div class="t hd" style="left:894px;top:425px;width:37px;height:18px;line-height:18px;"><span class=c>胜负</span></div>
<div class="t hd" style="left:932px;top:425px;width:37px;height:18px;line-height:18px;"><span class=c>让球</span></div>
<div class="t hd" style="left:970px;top:425px;width:56px;height:18px;line-height:18px;"><span class=c>进球数</span></div>
<div class="sel" style="left:544px;top:404px;width:60px"><span>Crow*</span><svg class="chev" width="10" height="7" viewBox="0 0 10 7"><path d="M1 1.2 L5 5.2 L9 1.2" fill="none" stroke="#111" stroke-width="2.3"/></svg></div><div class="sel" style="left:613px;top:404px;width:49px"><span>终指</span><svg class="chev" width="10" height="7" viewBox="0 0 10 7"><path d="M1 1.2 L5 5.2 L9 1.2" fill="none" stroke="#111" stroke-width="2.3"/></svg></div><div class="sel" style="left:730px;top:404px;width:68px"><span>平均值</span><svg class="chev" width="10" height="7" viewBox="0 0 10 7"><path d="M1 1.2 L5 5.2 L9 1.2" fill="none" stroke="#111" stroke-width="2.3"/></svg></div><div class="sel" style="left:808px;top:404px;width:49px"><span>终指</span><svg class="chev" width="10" height="7" viewBox="0 0 10 7"><path d="M1 1.2 L5 5.2 L9 1.2" fill="none" stroke="#111" stroke-width="2.3"/></svg></div><div class="sel" style="left:934px;top:404px;width:49px"><span>全场</span><svg class="chev" width="10" height="7" viewBox="0 0 10 7"><path d="M1 1.2 L5 5.2 L9 1.2" fill="none" stroke="#111" stroke-width="2.3"/></svg></div>
<div class="b" style="left:0px;top:443px;width:1026px;height:25px;background:#fff"></div>
<div class="b" style="left:0px;top:443px;width:80px;height:25px;background:#663333"></div>
<div class="b" style="left:514px;top:443px;width:181px;height:25px;background:#fffaf6"></div>
<div class="b" style="left:696px;top:443px;width:197px;height:25px;background:#f2f8fc"></div>
<div class="b" style="left:80px;top:468px;width:946px;height:1px;background:#c4c4c4"></div>
<div class="b" style="left:0px;top:468px;width:80px;height:1px;background:#663333"></div>
<div class="b" style="left:0px;top:468px;width:80px;height:1px;background:rgba(255,255,255,0.45)"></div>
<div class="b" style="left:80px;top:443px;width:1px;height:25px;background:#c4c4c4"></div>
<div class="b" style="left:155px;top:443px;width:1px;height:25px;background:#c4c4c4"></div>
<div class="b" style="left:281px;top:443px;width:1px;height:25px;background:#c4c4c4"></div>
<div class="b" style="left:370px;top:443px;width:1px;height:25px;background:#c4c4c4"></div>
<div class="b" style="left:409px;top:443px;width:1px;height:25px;background:#c4c4c4"></div>
<div class="b" style="left:513px;top:443px;width:1px;height:25px;background:#c4c4c4"></div>
<div class="b" style="left:561px;top:443px;width:1px;height:25px;background:#c4c4c4"></div>
<div class="b" style="left:644px;top:443px;width:1px;height:25px;background:#c4c4c4"></div>
<div class="b" style="left:695px;top:443px;width:1px;height:25px;background:#c4c4c4"></div>
<div class="b" style="left:756px;top:443px;width:1px;height:25px;background:#c4c4c4"></div>
<div class="b" style="left:817px;top:443px;width:1px;height:25px;background:#c4c4c4"></div>
<div class="b" style="left:893px;top:443px;width:1px;height:25px;background:#c4c4c4"></div>
<div class="b" style="left:931px;top:443px;width:1px;height:25px;background:#c4c4c4"></div>
<div class="b" style="left:969px;top:443px;width:1px;height:25px;background:#c4c4c4"></div>
<div class="b" style="left:1026px;top:443px;width:1px;height:25px;background:#c4c4c4"></div>
<div class="t ty" style="left:0px;top:444px;width:80px;height:25px;line-height:25px;"><span class=c>法甲</span></div>
<div class="t " style="left:81px;top:444px;width:74px;height:25px;line-height:25px;">25-09-14</div>
<div class="t " style="left:156px;top:444px;width:125px;height:25px;line-height:25px;"><span class="rc">1</span><span class=c>欧塞尔</span></div>
<div class="t " style="left:282px;top:444px;width:88px;height:25px;line-height:25px;"><span class="rd">1-2</span>(0-1)</div>
<div class="t " style="left:371px;top:444px;width:38px;height:25px;line-height:25px;">5-8</div>
<div class="t " style="left:410px;top:444px;width:103px;height:25px;line-height:25px;"><span class="gr"><span class=c>摩纳哥</span></span></div>
<div class="t " style="left:514px;top:444px;width:47px;height:25px;line-height:25px;">0.96</div>
<div class="t " style="left:562px;top:444px;width:82px;height:25px;line-height:25px;"><span class=c>受一球</span></div>
<div class="t " style="left:645px;top:444px;width:50px;height:25px;line-height:25px;">0.93</div>
<div class="t " style="left:696px;top:444px;width:60px;height:25px;line-height:25px;">4.99</div>
<div class="t " style="left:757px;top:444px;width:60px;height:25px;line-height:25px;">4.51</div>
<div class="t " style="left:818px;top:444px;width:75px;height:25px;line-height:25px;">1.58</div>
<div class="t " style="left:894px;top:444px;width:37px;height:25px;line-height:25px;color:#d82222"><span class=c>胜</span></div>
<div class="t " style="left:932px;top:444px;width:37px;height:25px;line-height:25px;color:#178017"><span class=c>走</span></div>
<div class="t " style="left:970px;top:444px;width:56px;height:25px;line-height:25px;color:#1c1cc0"><span class=c>小</span></div>
<div class="b" style="left:0px;top:469px;width:1026px;height:25px;background:#efefef"></div>
<div class="b" style="left:0px;top:469px;width:80px;height:25px;background:#663333"></div>
<div class="b" style="left:514px;top:469px;width:181px;height:25px;background:#fffaf6"></div>
<div class="b" style="left:696px;top:469px;width:197px;height:25px;background:#f2f8fc"></div>
<div class="b" style="left:80px;top:494px;width:946px;height:1px;background:#c4c4c4"></div>
<div class="b" style="left:0px;top:494px;width:80px;height:1px;background:#663333"></div>
<div class="b" style="left:0px;top:494px;width:80px;height:1px;background:rgba(255,255,255,0.45)"></div>
<div class="b" style="left:80px;top:469px;width:1px;height:25px;background:#c4c4c4"></div>
<div class="b" style="left:155px;top:469px;width:1px;height:25px;background:#c4c4c4"></div>
<div class="b" style="left:281px;top:469px;width:1px;height:25px;background:#c4c4c4"></div>
<div class="b" style="left:370px;top:469px;width:1px;height:25px;background:#c4c4c4"></div>
<div class="b" style="left:409px;top:469px;width:1px;height:25px;background:#c4c4c4"></div>
<div class="b" style="left:513px;top:469px;width:1px;height:25px;background:#c4c4c4"></div>
<div class="b" style="left:561px;top:469px;width:1px;height:25px;background:#c4c4c4"></div>
<div class="b" style="left:644px;top:469px;width:1px;height:25px;background:#c4c4c4"></div>
<div class="b" style="left:695px;top:469px;width:1px;height:25px;background:#c4c4c4"></div>
<div class="b" style="left:756px;top:469px;width:1px;height:25px;background:#c4c4c4"></div>
<div class="b" style="left:817px;top:469px;width:1px;height:25px;background:#c4c4c4"></div>
<div class="b" style="left:893px;top:469px;width:1px;height:25px;background:#c4c4c4"></div>
<div class="b" style="left:931px;top:469px;width:1px;height:25px;background:#c4c4c4"></div>
<div class="b" style="left:969px;top:469px;width:1px;height:25px;background:#c4c4c4"></div>
<div class="b" style="left:1026px;top:469px;width:1px;height:25px;background:#c4c4c4"></div>
<div class="t ty" style="left:0px;top:470px;width:80px;height:25px;line-height:25px;"><span class=c>法甲</span></div>
<div class="t " style="left:81px;top:470px;width:74px;height:25px;line-height:25px;">25-08-31</div>
<div class="t " style="left:156px;top:470px;width:125px;height:25px;line-height:25px;"><span class="gr"><span class=c>摩纳哥</span></span></div>
<div class="t " style="left:282px;top:470px;width:88px;height:25px;line-height:25px;"><span class="rd">3-2</span>(1-0)</div>
<div class="t " style="left:371px;top:470px;width:38px;height:25px;line-height:25px;">6-5</div>
<div class="t " style="left:410px;top:470px;width:103px;height:25px;line-height:25px;"><span class=c>斯特拉斯堡</span><span class="rc">1</span></div>
<div class="t " style="left:514px;top:470px;width:47px;height:25px;line-height:25px;">0.92</div>
<div class="t " style="left:562px;top:470px;width:82px;height:25px;line-height:25px;"><span class=c>一</span>/<span class=c>球半</span></div>
<div class="t " style="left:645px;top:470px;width:50px;height:25px;line-height:25px;">0.97</div>
<div class="t " style="left:696px;top:470px;width:60px;height:25px;line-height:25px;">1.43</div>
<div class="t " style="left:757px;top:470px;width:60px;height:25px;line-height:25px;">4.94</div>
<div class="t " style="left:818px;top:470px;width:75px;height:25px;line-height:25px;">6.55</div>
<div class="t " style="left:894px;top:470px;width:37px;height:25px;line-height:25px;color:#d82222"><span class=c>胜</span></div>
<div class="t " style="left:932px;top:470px;width:37px;height:25px;line-height:25px;color:#1c1cc0"><span class=c>输</span></div>
<div class="t " style="left:970px;top:470px;width:56px;height:25px;line-height:25px;color:#d82222"><span class=c>大</span></div>
<div class="b" style="left:0px;top:495px;width:1026px;height:25px;background:#fff"></div>
<div class="b" style="left:0px;top:495px;width:80px;height:25px;background:#663333"></div>
<div class="b" style="left:514px;top:495px;width:181px;height:25px;background:#fffaf6"></div>
<div class="b" style="left:696px;top:495px;width:197px;height:25px;background:#f2f8fc"></div>
<div class="b" style="left:80px;top:520px;width:946px;height:1px;background:#c4c4c4"></div>
<div class="b" style="left:0px;top:520px;width:80px;height:1px;background:#663333"></div>
<div class="b" style="left:0px;top:520px;width:80px;height:1px;background:rgba(255,255,255,0.45)"></div>
<div class="b" style="left:80px;top:495px;width:1px;height:25px;background:#c4c4c4"></div>
<div class="b" style="left:155px;top:495px;width:1px;height:25px;background:#c4c4c4"></div>
<div class="b" style="left:281px;top:495px;width:1px;height:25px;background:#c4c4c4"></div>
<div class="b" style="left:370px;top:495px;width:1px;height:25px;background:#c4c4c4"></div>
<div class="b" style="left:409px;top:495px;width:1px;height:25px;background:#c4c4c4"></div>
<div class="b" style="left:513px;top:495px;width:1px;height:25px;background:#c4c4c4"></div>
<div class="b" style="left:561px;top:495px;width:1px;height:25px;background:#c4c4c4"></div>
<div class="b" style="left:644px;top:495px;width:1px;height:25px;background:#c4c4c4"></div>
<div class="b" style="left:695px;top:495px;width:1px;height:25px;background:#c4c4c4"></div>
<div class="b" style="left:756px;top:495px;width:1px;height:25px;background:#c4c4c4"></div>
<div class="b" style="left:817px;top:495px;width:1px;height:25px;background:#c4c4c4"></div>
<div class="b" style="left:893px;top:495px;width:1px;height:25px;background:#c4c4c4"></div>
<div class="b" style="left:931px;top:495px;width:1px;height:25px;background:#c4c4c4"></div>
<div class="b" style="left:969px;top:495px;width:1px;height:25px;background:#c4c4c4"></div>
<div class="b" style="left:1026px;top:495px;width:1px;height:25px;background:#c4c4c4"></div>
<div class="t ty" style="left:0px;top:496px;width:80px;height:25px;line-height:25px;"><span class=c>法甲</span></div>
<div class="t " style="left:81px;top:496px;width:74px;height:25px;line-height:25px;">25-08-25</div>
<div class="t " style="left:156px;top:496px;width:125px;height:25px;line-height:25px;"><span class=c>里尔</span></div>
<div class="t " style="left:282px;top:496px;width:88px;height:25px;line-height:25px;"><span class="rd">1-0</span>(0-0)</div>
<div class="t " style="left:371px;top:496px;width:38px;height:25px;line-height:25px;">8-3</div>
<div class="t " style="left:410px;top:496px;width:103px;height:25px;line-height:25px;"><span class="gr"><span class=c>摩纳哥</span></span></div>
<div class="t " style="left:514px;top:496px;width:47px;height:25px;line-height:25px;">1.00</div>
<div class="t " style="left:562px;top:496px;width:82px;height:25px;line-height:25px;"><span class=c>受平</span>/<span class=c>半</span></div>
<div class="t " style="left:645px;top:496px;width:50px;height:25px;line-height:25px;">0.89</div>
<div class="t " style="left:696px;top:496px;width:60px;height:25px;line-height:25px;">3.25</div>
<div class="t " style="left:757px;top:496px;width:60px;height:25px;line-height:25px;">3.61</div>
<div class="t " style="left:818px;top:496px;width:75px;height:25px;line-height:25px;">2.13</div>
<div class="t " style="left:894px;top:496px;width:37px;height:25px;line-height:25px;color:#1c1cc0"><span class=c>负</span></div>
<div class="t " style="left:932px;top:496px;width:37px;height:25px;line-height:25px;color:#1c1cc0"><span class=c>输</span></div>
<div class="t " style="left:970px;top:496px;width:56px;height:25px;line-height:25px;color:#1c1cc0"><span class=c>小</span></div>
<div class="b" style="left:0px;top:521px;width:1026px;height:25px;background:#efefef"></div>
<div class="b" style="left:0px;top:521px;width:80px;height:25px;background:#663333"></div>
<div class="b" style="left:514px;top:521px;width:181px;height:25px;background:#fffaf6"></div>
<div class="b" style="left:696px;top:521px;width:197px;height:25px;background:#f2f8fc"></div>
<div class="b" style="left:80px;top:546px;width:946px;height:1px;background:#c4c4c4"></div>
<div class="b" style="left:0px;top:546px;width:80px;height:1px;background:#663333"></div>
<div class="b" style="left:0px;top:546px;width:80px;height:1px;background:rgba(255,255,255,0.45)"></div>
<div class="b" style="left:80px;top:521px;width:1px;height:25px;background:#c4c4c4"></div>
<div class="b" style="left:155px;top:521px;width:1px;height:25px;background:#c4c4c4"></div>
<div class="b" style="left:281px;top:521px;width:1px;height:25px;background:#c4c4c4"></div>
<div class="b" style="left:370px;top:521px;width:1px;height:25px;background:#c4c4c4"></div>
<div class="b" style="left:409px;top:521px;width:1px;height:25px;background:#c4c4c4"></div>
<div class="b" style="left:513px;top:521px;width:1px;height:25px;background:#c4c4c4"></div>
<div class="b" style="left:561px;top:521px;width:1px;height:25px;background:#c4c4c4"></div>
<div class="b" style="left:644px;top:521px;width:1px;height:25px;background:#c4c4c4"></div>
<div class="b" style="left:695px;top:521px;width:1px;height:25px;background:#c4c4c4"></div>
<div class="b" style="left:756px;top:521px;width:1px;height:25px;background:#c4c4c4"></div>
<div class="b" style="left:817px;top:521px;width:1px;height:25px;background:#c4c4c4"></div>
<div class="b" style="left:893px;top:521px;width:1px;height:25px;background:#c4c4c4"></div>
<div class="b" style="left:931px;top:521px;width:1px;height:25px;background:#c4c4c4"></div>
<div class="b" style="left:969px;top:521px;width:1px;height:25px;background:#c4c4c4"></div>
<div class="b" style="left:1026px;top:521px;width:1px;height:25px;background:#c4c4c4"></div>
<div class="t ty" style="left:0px;top:522px;width:80px;height:25px;line-height:25px;"><span class=c>法甲</span></div>
<div class="t " style="left:81px;top:522px;width:74px;height:25px;line-height:25px;">25-08-17</div>
<div class="t " style="left:156px;top:522px;width:125px;height:25px;line-height:25px;"><span class="gr"><span class=c>摩纳哥</span></span></div>
<div class="t " style="left:282px;top:522px;width:88px;height:25px;line-height:25px;"><span class="rd">3-1</span>(1-0)</div>
<div class="t " style="left:371px;top:522px;width:38px;height:25px;line-height:25px;">5-4</div>
<div class="t " style="left:410px;top:522px;width:103px;height:25px;line-height:25px;"><span class=c>勒阿弗尔</span></div>
<div class="t " style="left:514px;top:522px;width:47px;height:25px;line-height:25px;">1.03</div>
<div class="t " style="left:562px;top:522px;width:82px;height:25px;line-height:25px;"><span class=c>两球</span></div>
<div class="t " style="left:645px;top:522px;width:50px;height:25px;line-height:25px;">0.86</div>
<div class="t " style="left:696px;top:522px;width:60px;height:25px;line-height:25px;">1.25</div>
<div class="t " style="left:757px;top:522px;width:60px;height:25px;line-height:25px;">6.34</div>
<div class="t " style="left:818px;top:522px;width:75px;height:25px;line-height:25px;">10.91</div>
<div class="t " style="left:894px;top:522px;width:37px;height:25px;line-height:25px;color:#d82222"><span class=c>胜</span></div>
<div class="t " style="left:932px;top:522px;width:37px;height:25px;line-height:25px;color:#178017"><span class=c>走</span></div>
<div class="t " style="left:970px;top:522px;width:56px;height:25px;line-height:25px;color:#d82222"><span class=c>大</span></div>
<div class="b" style="left:0px;top:547px;width:1026px;height:25px;background:#fff"></div>
<div class="b" style="left:0px;top:547px;width:80px;height:25px;background:#0ba8a8"></div>
<div class="b" style="left:514px;top:547px;width:181px;height:25px;background:#fffaf6"></div>
<div class="b" style="left:696px;top:547px;width:197px;height:25px;background:#f2f8fc"></div>
<div class="b" style="left:80px;top:572px;width:946px;height:1px;background:#c4c4c4"></div>
<div class="b" style="left:0px;top:572px;width:80px;height:1px;background:#0ba8a8"></div>
<div class="b" style="left:0px;top:572px;width:80px;height:1px;background:rgba(255,255,255,0.45)"></div>
<div class="b" style="left:80px;top:547px;width:1px;height:25px;background:#c4c4c4"></div>
<div class="b" style="left:155px;top:547px;width:1px;height:25px;background:#c4c4c4"></div>
<div class="b" style="left:281px;top:547px;width:1px;height:25px;background:#c4c4c4"></div>
<div class="b" style="left:370px;top:547px;width:1px;height:25px;background:#c4c4c4"></div>
<div class="b" style="left:409px;top:547px;width:1px;height:25px;background:#c4c4c4"></div>
<div class="b" style="left:513px;top:547px;width:1px;height:25px;background:#c4c4c4"></div>
<div class="b" style="left:561px;top:547px;width:1px;height:25px;background:#c4c4c4"></div>
<div class="b" style="left:644px;top:547px;width:1px;height:25px;background:#c4c4c4"></div>
<div class="b" style="left:695px;top:547px;width:1px;height:25px;background:#c4c4c4"></div>
<div class="b" style="left:756px;top:547px;width:1px;height:25px;background:#c4c4c4"></div>
<div class="b" style="left:817px;top:547px;width:1px;height:25px;background:#c4c4c4"></div>
<div class="b" style="left:893px;top:547px;width:1px;height:25px;background:#c4c4c4"></div>
<div class="b" style="left:931px;top:547px;width:1px;height:25px;background:#c4c4c4"></div>
<div class="b" style="left:969px;top:547px;width:1px;height:25px;background:#c4c4c4"></div>
<div class="b" style="left:1026px;top:547px;width:1px;height:25px;background:#c4c4c4"></div>
<div class="t ty" style="left:0px;top:548px;width:80px;height:25px;line-height:25px;"><span class=c>球会友谊</span></div>
<div class="t " style="left:81px;top:548px;width:74px;height:25px;line-height:25px;">25-08-09</div>
<div class="t " style="left:156px;top:548px;width:125px;height:25px;line-height:25px;"><span class="gr"><span class=c>摩纳哥</span></span></div>
<div class="t " style="left:282px;top:548px;width:88px;height:25px;line-height:25px;"><span class="rd">1-2</span>(1-0)</div>
<div class="t " style="left:371px;top:548px;width:38px;height:25px;line-height:25px;">4-4</div>
<div class="t " style="left:410px;top:548px;width:103px;height:25px;line-height:25px;"><span class=c>国际米兰</span><span class="rc">1</span></div>
<div class="t " style="left:514px;top:548px;width:47px;height:25px;line-height:25px;">1.04</div>
<div class="t " style="left:562px;top:548px;width:82px;height:25px;line-height:25px;"><span class=c>平手</span></div>
<div class="t " style="left:645px;top:548px;width:50px;height:25px;line-height:25px;">0.78</div>
<div class="t " style="left:696px;top:548px;width:60px;height:25px;line-height:25px;">2.28</div>
<div class="t " style="left:757px;top:548px;width:60px;height:25px;line-height:25px;">3.64</div>
<div class="t " style="left:818px;top:548px;width:75px;height:25px;line-height:25px;">2.68</div>
<div class="t " style="left:894px;top:548px;width:37px;height:25px;line-height:25px;color:#1c1cc0"><span class=c>负</span></div>
<div class="t " style="left:932px;top:548px;width:37px;height:25px;line-height:25px;color:#1c1cc0"><span class=c>输</span></div>
<div class="t " style="left:970px;top:548px;width:56px;height:25px;line-height:25px;color:#178017"><span class=c>走</span></div>
<div class="b" style="left:0px;top:573px;width:1026px;height:25px;background:#efefef"></div>
<div class="b" style="left:0px;top:573px;width:80px;height:25px;background:#0ba8a8"></div>
<div class="b" style="left:514px;top:573px;width:181px;height:25px;background:#fffaf6"></div>
<div class="b" style="left:696px;top:573px;width:197px;height:25px;background:#f2f8fc"></div>
<div class="b" style="left:80px;top:598px;width:946px;height:1px;background:#c4c4c4"></div>
<div class="b" style="left:0px;top:598px;width:80px;height:1px;background:#0ba8a8"></div>
<div class="b" style="left:0px;top:598px;width:80px;height:1px;background:rgba(255,255,255,0.45)"></div>
<div class="b" style="left:80px;top:573px;width:1px;height:25px;background:#c4c4c4"></div>
<div class="b" style="left:155px;top:573px;width:1px;height:25px;background:#c4c4c4"></div>
<div class="b" style="left:281px;top:573px;width:1px;height:25px;background:#c4c4c4"></div>
<div class="b" style="left:370px;top:573px;width:1px;height:25px;background:#c4c4c4"></div>
<div class="b" style="left:409px;top:573px;width:1px;height:25px;background:#c4c4c4"></div>
<div class="b" style="left:513px;top:573px;width:1px;height:25px;background:#c4c4c4"></div>
<div class="b" style="left:561px;top:573px;width:1px;height:25px;background:#c4c4c4"></div>
<div class="b" style="left:644px;top:573px;width:1px;height:25px;background:#c4c4c4"></div>
<div class="b" style="left:695px;top:573px;width:1px;height:25px;background:#c4c4c4"></div>
<div class="b" style="left:756px;top:573px;width:1px;height:25px;background:#c4c4c4"></div>
<div class="b" style="left:817px;top:573px;width:1px;height:25px;background:#c4c4c4"></div>
<div class="b" style="left:893px;top:573px;width:1px;height:25px;background:#c4c4c4"></div>
<div class="b" style="left:931px;top:573px;width:1px;height:25px;background:#c4c4c4"></div>
<div class="b" style="left:969px;top:573px;width:1px;height:25px;background:#c4c4c4"></div>
<div class="b" style="left:1026px;top:573px;width:1px;height:25px;background:#c4c4c4"></div>
<div class="t ty" style="left:0px;top:574px;width:80px;height:25px;line-height:25px;"><span class=c>球会友谊</span></div>
<div class="t " style="left:81px;top:574px;width:74px;height:25px;line-height:25px;">25-08-03</div>
<div class="t " style="left:156px;top:574px;width:125px;height:25px;line-height:25px;"><span class=c>阿贾克斯</span></div>
<div class="t " style="left:282px;top:574px;width:88px;height:25px;line-height:25px;"><span class="rd">2-2</span>(1-1)</div>
<div class="t " style="left:371px;top:574px;width:38px;height:25px;line-height:25px;">5-6</div>
<div class="t " style="left:410px;top:574px;width:103px;height:25px;line-height:25px;"><span class="gr"><span class=c>摩纳哥</span></span></div>
<div class="t " style="left:514px;top:574px;width:47px;height:25px;line-height:25px;">0.90</div>
<div class="t " style="left:562px;top:574px;width:82px;height:25px;line-height:25px;"><span class=c>受半球</span></div>
<div class="t " style="left:645px;top:574px;width:50px;height:25px;line-height:25px;">0.92</div>
<div class="t " style="left:696px;top:574px;width:60px;height:25px;line-height:25px;">2.77</div>
<div class="t " style="left:757px;top:574px;width:60px;height:25px;line-height:25px;">3.58</div>
<div class="t " style="left:818px;top:574px;width:75px;height:25px;line-height:25px;">2.23</div>
<div class="t " style="left:894px;top:574px;width:37px;height:25px;line-height:25px;color:#178017"><span class=c>平</span></div>
<div class="t " style="left:932px;top:574px;width:37px;height:25px;line-height:25px;color:#1c1cc0"><span class=c>输</span></div>
<div class="t " style="left:970px;top:574px;width:56px;height:25px;line-height:25px;color:#d82222"><span class=c>大</span></div>
<div class="b" style="left:0px;top:599px;width:1026px;height:25px;background:#fff"></div>
<div class="b" style="left:0px;top:599px;width:80px;height:25px;background:#0ba8a8"></div>
<div class="b" style="left:514px;top:599px;width:181px;height:25px;background:#fffaf6"></div>
<div class="b" style="left:696px;top:599px;width:197px;height:25px;background:#f2f8fc"></div>
<div class="b" style="left:80px;top:624px;width:946px;height:1px;background:#c4c4c4"></div>
<div class="b" style="left:0px;top:624px;width:80px;height:1px;background:#0ba8a8"></div>
<div class="b" style="left:0px;top:624px;width:80px;height:1px;background:rgba(255,255,255,0.45)"></div>
<div class="b" style="left:80px;top:599px;width:1px;height:25px;background:#c4c4c4"></div>
<div class="b" style="left:155px;top:599px;width:1px;height:25px;background:#c4c4c4"></div>
<div class="b" style="left:281px;top:599px;width:1px;height:25px;background:#c4c4c4"></div>
<div class="b" style="left:370px;top:599px;width:1px;height:25px;background:#c4c4c4"></div>
<div class="b" style="left:409px;top:599px;width:1px;height:25px;background:#c4c4c4"></div>
<div class="b" style="left:513px;top:599px;width:1px;height:25px;background:#c4c4c4"></div>
<div class="b" style="left:561px;top:599px;width:1px;height:25px;background:#c4c4c4"></div>
<div class="b" style="left:644px;top:599px;width:1px;height:25px;background:#c4c4c4"></div>
<div class="b" style="left:695px;top:599px;width:1px;height:25px;background:#c4c4c4"></div>
<div class="b" style="left:756px;top:599px;width:1px;height:25px;background:#c4c4c4"></div>
<div class="b" style="left:817px;top:599px;width:1px;height:25px;background:#c4c4c4"></div>
<div class="b" style="left:893px;top:599px;width:1px;height:25px;background:#c4c4c4"></div>
<div class="b" style="left:931px;top:599px;width:1px;height:25px;background:#c4c4c4"></div>
<div class="b" style="left:969px;top:599px;width:1px;height:25px;background:#c4c4c4"></div>
<div class="b" style="left:1026px;top:599px;width:1px;height:25px;background:#c4c4c4"></div>
<div class="t ty" style="left:0px;top:600px;width:80px;height:25px;line-height:25px;"><span class=c>球会友谊</span></div>
<div class="t " style="left:81px;top:600px;width:74px;height:25px;line-height:25px;">25-07-31</div>
<div class="t " style="left:156px;top:600px;width:125px;height:25px;line-height:25px;"><span class="gr"><span class=c>摩纳哥</span></span></div>
<div class="t " style="left:282px;top:600px;width:88px;height:25px;line-height:25px;"><span class="rd">3-1</span>(2-0)</div>
<div class="t " style="left:371px;top:600px;width:38px;height:25px;line-height:25px;">7-5</div>
<div class="t " style="left:410px;top:600px;width:103px;height:25px;line-height:25px;"><span class=c>都灵</span></div>
<div class="t " style="left:514px;top:600px;width:47px;height:25px;line-height:25px;"></div>
<div class="t " style="left:562px;top:600px;width:82px;height:25px;line-height:25px;"></div>
<div class="t " style="left:645px;top:600px;width:50px;height:25px;line-height:25px;"></div>
<div class="t " style="left:696px;top:600px;width:60px;height:25px;line-height:25px;">1.89</div>
<div class="t " style="left:757px;top:600px;width:60px;height:25px;line-height:25px;">3.47</div>
<div class="t " style="left:818px;top:600px;width:75px;height:25px;line-height:25px;">3.98</div>
<div class="t " style="left:894px;top:600px;width:37px;height:25px;line-height:25px;color:#d82222"><span class=c>胜</span></div>
<div class="t " style="left:932px;top:600px;width:37px;height:25px;line-height:25px;color:#333"></div>
<div class="t " style="left:970px;top:600px;width:56px;height:25px;line-height:25px;color:#d82222"><span class=c>大</span></div>
<div class="b" style="left:0px;top:625px;width:1026px;height:25px;background:#efefef"></div>
<div class="b" style="left:0px;top:625px;width:80px;height:25px;background:#0ba8a8"></div>
<div class="b" style="left:514px;top:625px;width:181px;height:25px;background:#fffaf6"></div>
<div class="b" style="left:696px;top:625px;width:197px;height:25px;background:#f2f8fc"></div>
<div class="b" style="left:80px;top:650px;width:946px;height:1px;background:#c4c4c4"></div>
<div class="b" style="left:0px;top:650px;width:80px;height:1px;background:#0ba8a8"></div>
<div class="b" style="left:0px;top:650px;width:80px;height:1px;background:rgba(255,255,255,0.45)"></div>
<div class="b" style="left:80px;top:625px;width:1px;height:25px;background:#c4c4c4"></div>
<div class="b" style="left:155px;top:625px;width:1px;height:25px;background:#c4c4c4"></div>
<div class="b" style="left:281px;top:625px;width:1px;height:25px;background:#c4c4c4"></div>
<div class="b" style="left:370px;top:625px;width:1px;height:25px;background:#c4c4c4"></div>
<div class="b" style="left:409px;top:625px;width:1px;height:25px;background:#c4c4c4"></div>
<div class="b" style="left:513px;top:625px;width:1px;height:25px;background:#c4c4c4"></div>
<div class="b" style="left:561px;top:625px;width:1px;height:25px;background:#c4c4c4"></div>
<div class="b" style="left:644px;top:625px;width:1px;height:25px;background:#c4c4c4"></div>
<div class="b" style="left:695px;top:625px;width:1px;height:25px;background:#c4c4c4"></div>
<div class="b" style="left:756px;top:625px;width:1px;height:25px;background:#c4c4c4"></div>
<div class="b" style="left:817px;top:625px;width:1px;height:25px;background:#c4c4c4"></div>
<div class="b" style="left:893px;top:625px;width:1px;height:25px;background:#c4c4c4"></div>
<div class="b" style="left:931px;top:625px;width:1px;height:25px;background:#c4c4c4"></div>
<div class="b" style="left:969px;top:625px;width:1px;height:25px;background:#c4c4c4"></div>
<div class="b" style="left:1026px;top:625px;width:1px;height:25px;background:#c4c4c4"></div>
<div class="t ty" style="left:0px;top:626px;width:80px;height:25px;line-height:25px;"><span class=c>球会友谊</span></div>
<div class="t " style="left:81px;top:626px;width:74px;height:25px;line-height:25px;">25-07-31</div>
<div class="t " style="left:156px;top:626px;width:125px;height:25px;line-height:25px;"><span class="gr"><span class=c>摩纳哥</span></span></div>
<div class="t " style="left:282px;top:626px;width:88px;height:25px;line-height:25px;"><span class="rd">3-1</span>(2-0)</div>
<div class="t " style="left:371px;top:626px;width:38px;height:25px;line-height:25px;">6-2</div>
<div class="t " style="left:410px;top:626px;width:103px;height:25px;line-height:25px;"><span class=c>都灵</span></div>
<div class="t " style="left:514px;top:626px;width:47px;height:25px;line-height:25px;">0.85</div>
<div class="t " style="left:562px;top:626px;width:82px;height:25px;line-height:25px;"><span class=c>半</span>/<span class=c>一</span></div>
<div class="t " style="left:645px;top:626px;width:50px;height:25px;line-height:25px;">0.97</div>
<div class="t " style="left:696px;top:626px;width:60px;height:25px;line-height:25px;">1.63</div>
<div class="t " style="left:757px;top:626px;width:60px;height:25px;line-height:25px;">3.62</div>
<div class="t " style="left:818px;top:626px;width:75px;height:25px;line-height:25px;">4.85</div>
<div class="t " style="left:894px;top:626px;width:37px;height:25px;line-height:25px;color:#d82222"><span class=c>胜</span></div>
<div class="t " style="left:932px;top:626px;width:37px;height:25px;line-height:25px;color:#d82222"><span class=c>赢</span></div>
<div class="t " style="left:970px;top:626px;width:56px;height:25px;line-height:25px;color:#d82222"><span class=c>大</span></div>
<div class="b" style="left:0px;top:651px;width:1026px;height:25px;background:#fff"></div>
<div class="b" style="left:0px;top:651px;width:80px;height:25px;background:#0ba8a8"></div>
<div class="b" style="left:514px;top:651px;width:181px;height:25px;background:#fffaf6"></div>
<div class="b" style="left:696px;top:651px;width:197px;height:25px;background:#f2f8fc"></div>
<div class="b" style="left:80px;top:676px;width:946px;height:1px;background:#c4c4c4"></div>
<div class="b" style="left:0px;top:676px;width:80px;height:1px;background:#0ba8a8"></div>
<div class="b" style="left:0px;top:676px;width:80px;height:1px;background:rgba(255,255,255,0.45)"></div>
<div class="b" style="left:80px;top:651px;width:1px;height:25px;background:#c4c4c4"></div>
<div class="b" style="left:155px;top:651px;width:1px;height:25px;background:#c4c4c4"></div>
<div class="b" style="left:281px;top:651px;width:1px;height:25px;background:#c4c4c4"></div>
<div class="b" style="left:370px;top:651px;width:1px;height:25px;background:#c4c4c4"></div>
<div class="b" style="left:409px;top:651px;width:1px;height:25px;background:#c4c4c4"></div>
<div class="b" style="left:513px;top:651px;width:1px;height:25px;background:#c4c4c4"></div>
<div class="b" style="left:561px;top:651px;width:1px;height:25px;background:#c4c4c4"></div>
<div class="b" style="left:644px;top:651px;width:1px;height:25px;background:#c4c4c4"></div>
<div class="b" style="left:695px;top:651px;width:1px;height:25px;background:#c4c4c4"></div>
<div class="b" style="left:756px;top:651px;width:1px;height:25px;background:#c4c4c4"></div>
<div class="b" style="left:817px;top:651px;width:1px;height:25px;background:#c4c4c4"></div>
<div class="b" style="left:893px;top:651px;width:1px;height:25px;background:#c4c4c4"></div>
<div class="b" style="left:931px;top:651px;width:1px;height:25px;background:#c4c4c4"></div>
<div class="b" style="left:969px;top:651px;width:1px;height:25px;background:#c4c4c4"></div>
<div class="b" style="left:1026px;top:651px;width:1px;height:25px;background:#c4c4c4"></div>
<div class="t ty" style="left:0px;top:652px;width:80px;height:25px;line-height:25px;"><span class=c>球会友谊</span></div>
<div class="t " style="left:81px;top:652px;width:74px;height:25px;line-height:25px;">25-07-26</div>
<div class="t " style="left:156px;top:652px;width:125px;height:25px;line-height:25px;"><span class=c>比勒菲尔德</span></div>
<div class="t " style="left:282px;top:652px;width:88px;height:25px;line-height:25px;"><span class="rd">0-3</span>(0-1)</div>
<div class="t " style="left:371px;top:652px;width:38px;height:25px;line-height:25px;">6-4</div>
<div class="t " style="left:410px;top:652px;width:103px;height:25px;line-height:25px;"><span class="gr"><span class=c>摩纳哥</span></span></div>
<div class="t " style="left:514px;top:652px;width:47px;height:25px;line-height:25px;">0.85</div>
<div class="t " style="left:562px;top:652px;width:82px;height:25px;line-height:25px;"><span class=c>受半</span>/<span class=c>一</span></div>
<div class="t " style="left:645px;top:652px;width:50px;height:25px;line-height:25px;">0.91</div>
<div class="t " style="left:696px;top:652px;width:60px;height:25px;line-height:25px;">3.41</div>
<div class="t " style="left:757px;top:652px;width:60px;height:25px;line-height:25px;">3.74</div>
<div class="t " style="left:818px;top:652px;width:75px;height:25px;line-height:25px;">1.88</div>
<div class="t " style="left:894px;top:652px;width:37px;height:25px;line-height:25px;color:#d82222"><span class=c>胜</span></div>
<div class="t " style="left:932px;top:652px;width:37px;height:25px;line-height:25px;color:#d82222"><span class=c>赢</span></div>
<div class="t " style="left:970px;top:652px;width:56px;height:25px;line-height:25px;color:#d82222"><span class=c>大</span></div>
<div class="b" style="left:0px;top:677px;width:1026px;height:25px;background:#efefef"></div>
<div class="b" style="left:0px;top:677px;width:80px;height:25px;background:#0ba8a8"></div>
<div class="b" style="left:514px;top:677px;width:181px;height:25px;background:#fffaf6"></div>
<div class="b" style="left:696px;top:677px;width:197px;height:25px;background:#f2f8fc"></div>
<div class="b" style="left:80px;top:702px;width:946px;height:1px;background:#c4c4c4"></div>
<div class="b" style="left:0px;top:702px;width:80px;height:1px;background:#0ba8a8"></div>
<div class="b" style="left:0px;top:702px;width:80px;height:1px;background:rgba(255,255,255,0.45)"></div>
<div class="b" style="left:80px;top:677px;width:1px;height:25px;background:#c4c4c4"></div>
<div class="b" style="left:155px;top:677px;width:1px;height:25px;background:#c4c4c4"></div>
<div class="b" style="left:281px;top:677px;width:1px;height:25px;background:#c4c4c4"></div>
<div class="b" style="left:370px;top:677px;width:1px;height:25px;background:#c4c4c4"></div>
<div class="b" style="left:409px;top:677px;width:1px;height:25px;background:#c4c4c4"></div>
<div class="b" style="left:513px;top:677px;width:1px;height:25px;background:#c4c4c4"></div>
<div class="b" style="left:561px;top:677px;width:1px;height:25px;background:#c4c4c4"></div>
<div class="b" style="left:644px;top:677px;width:1px;height:25px;background:#c4c4c4"></div>
<div class="b" style="left:695px;top:677px;width:1px;height:25px;background:#c4c4c4"></div>
<div class="b" style="left:756px;top:677px;width:1px;height:25px;background:#c4c4c4"></div>
<div class="b" style="left:817px;top:677px;width:1px;height:25px;background:#c4c4c4"></div>
<div class="b" style="left:893px;top:677px;width:1px;height:25px;background:#c4c4c4"></div>
<div class="b" style="left:931px;top:677px;width:1px;height:25px;background:#c4c4c4"></div>
<div class="b" style="left:969px;top:677px;width:1px;height:25px;background:#c4c4c4"></div>
<div class="b" style="left:1026px;top:677px;width:1px;height:25px;background:#c4c4c4"></div>
<div class="t ty" style="left:0px;top:678px;width:80px;height:25px;line-height:25px;"><span class=c>球会友谊</span></div>
<div class="t " style="left:81px;top:678px;width:74px;height:25px;line-height:25px;">25-07-19</div>
<div class="t " style="left:156px;top:678px;width:125px;height:25px;line-height:25px;"><span class=c>诺丁汉森林</span>(<span class=c>中</span>)</div>
<div class="t " style="left:282px;top:678px;width:88px;height:25px;line-height:25px;"><span class="rd">0-0</span>(0-0)</div>
<div class="t " style="left:371px;top:678px;width:38px;height:25px;line-height:25px;">3-12</div>
<div class="t " style="left:410px;top:678px;width:103px;height:25px;line-height:25px;"><span class="gr"><span class=c>摩纳哥</span></span></div>
<div class="t " style="left:514px;top:678px;width:47px;height:25px;line-height:25px;">0.93</div>
<div class="t " style="left:562px;top:678px;width:82px;height:25px;line-height:25px;"><span class=c>受平</span>/<span class=c>半</span></div>
<div class="t " style="left:645px;top:678px;width:50px;height:25px;line-height:25px;">0.89</div>
<div class="t " style="left:696px;top:678px;width:60px;height:25px;line-height:25px;">3.13</div>
<div class="t " style="left:757px;top:678px;width:60px;height:25px;line-height:25px;">3.43</div>
<div class="t " style="left:818px;top:678px;width:75px;height:25px;line-height:25px;">2.07</div>
<div class="t " style="left:894px;top:678px;width:37px;height:25px;line-height:25px;color:#178017"><span class=c>平</span></div>
<div class="t " style="left:932px;top:678px;width:37px;height:25px;line-height:25px;color:#1c1cc0"><span class=c>输</span></div>
<div class="t " style="left:970px;top:678px;width:56px;height:25px;line-height:25px;color:#1c1cc0"><span class=c>小</span></div>
<div class="t sum" style="left:0px;top:704px;width:1026px;height:25px;line-height:25px;"><span class=c>近</span><span class="rd">10</span><span class=c>场</span>,<span class=c>胜</span>6<span class=c>平</span>2<span class=c>负</span>2, <span class=c>胜率</span>:<span class="rd">60%</span> <span class=c>让胜率</span>:<span class="rd">22.2%</span> <span class=c>大率</span>:<span class="rd">60%</span> <span class=c>单率</span>:<span class="rd">50%</span></div>
</body></html>
